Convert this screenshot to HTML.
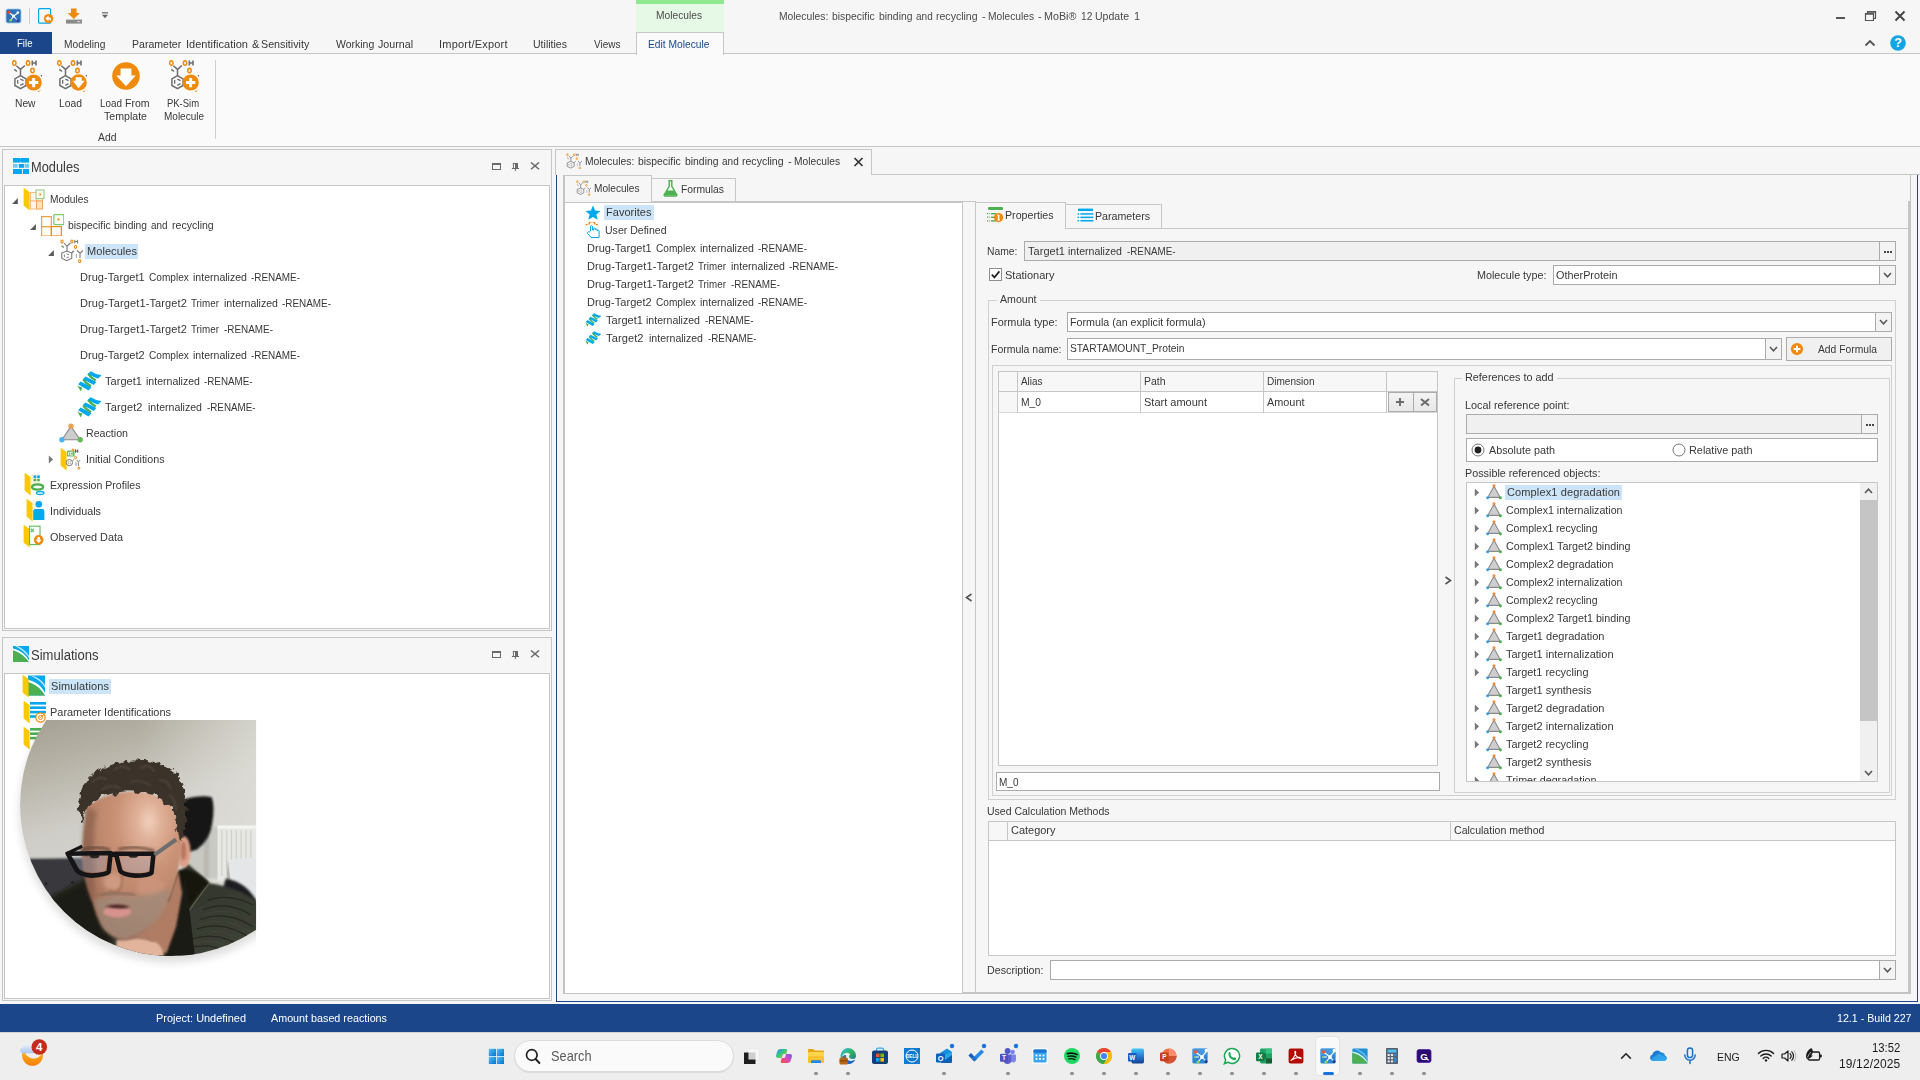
<!DOCTYPE html><html><head><meta charset="utf-8"><title>MoBi</title><style>
html,body{margin:0;padding:0;width:1920px;height:1080px;overflow:hidden;background:#f6f6f6;font-family:"Liberation Sans",sans-serif;}
#r{position:relative;width:1920px;height:1080px;overflow:hidden}
#r div,#r span,#r svg{position:absolute;box-sizing:border-box}
#r span{white-space:pre;transform-origin:0 50%}
</style></head><body><div id="r"><svg width="0" height="0" style="position:absolute"><defs><symbol id="molnew" viewBox="0 0 32 32">
<g fill="none" stroke="#6f6f6f" stroke-width="1.5" stroke-linecap="butt">
<path d="M5.4 5.7 L9.5 9.4 L13.9 5.5 M3.2 9.3 L6 11.5 M9.5 9.4 V15.7"/>
<path d="M9.5 15.7 L15.1 18.95 V25.45 L9.5 28.7 L3.9 25.45 V18.95 Z"/>
<path d="M6.7 19.9 V23.7 M9.3 19.2 L12.6 20.7 M9.3 25.3 L12.6 23.7" stroke-width="1.3"/>
</g>
<g fill="none" stroke="#f08a0c" stroke-width="1.5"><ellipse cx="3.3" cy="3" rx="1.7" ry="2.3"/><ellipse cx="17" cy="3" rx="1.7" ry="2.3"/><ellipse cx="21.5" cy="10.5" rx="1.7" ry="2.3"/></g>
<path d="M21.3 0.5 V5.6 M25 0.5 V5.6 M21.3 3 H25" stroke="#6f6f6f" stroke-width="1.6" fill="none"/>
<circle cx="30.4" cy="15.7" r=".7" fill="#555"/><path d="M27 31.6 q1.6 -.2 2.4 -1.4" stroke="#f08a0c" stroke-width="1" fill="none"/><circle cx="22.7" cy="22.5" r="8.1" fill="#f08a0c"/><path d="M22.65 18 V27.2 M18 22.5 H27.3" stroke="#fff" stroke-width="3"/></symbol><symbol id="molload" viewBox="0 0 32 32">
<g fill="none" stroke="#6f6f6f" stroke-width="1.5" stroke-linecap="butt">
<path d="M5.4 5.7 L9.5 9.4 L13.9 5.5 M3.2 9.3 L6 11.5 M9.5 9.4 V15.7"/>
<path d="M9.5 15.7 L15.1 18.95 V25.45 L9.5 28.7 L3.9 25.45 V18.95 Z"/>
<path d="M6.7 19.9 V23.7 M9.3 19.2 L12.6 20.7 M9.3 25.3 L12.6 23.7" stroke-width="1.3"/>
</g>
<g fill="none" stroke="#f08a0c" stroke-width="1.5"><ellipse cx="3.3" cy="3" rx="1.7" ry="2.3"/><ellipse cx="17" cy="3" rx="1.7" ry="2.3"/><ellipse cx="21.5" cy="10.5" rx="1.7" ry="2.3"/></g>
<path d="M21.3 0.5 V5.6 M25 0.5 V5.6 M21.3 3 H25" stroke="#6f6f6f" stroke-width="1.6" fill="none"/>
<circle cx="30.4" cy="15.7" r=".7" fill="#555"/><path d="M27 31.6 q1.6 -.2 2.4 -1.4" stroke="#f08a0c" stroke-width="1" fill="none"/><circle cx="22.6" cy="22.5" r="8.2" fill="#f08a0c"/><path d="M19.7 17.3 h6 v3.5 h3.1 L22.6 28.3 L16.8 20.8 H19.7 Z" fill="#fff"/></symbol><symbol id="bigdown" viewBox="0 0 32 32"><circle cx="16" cy="16" r="13.8" fill="#f08a0c"/><path d="M10.6 8.4 h10.8 v7.2 h4.4 L16 26.2 L6.2 15.6 h4.4 Z" fill="#fff"/></symbol><symbol id="molsm" viewBox="0 0 23 24">
<g fill="none" stroke="#777" stroke-width="1.1">
<path d="M4 4 L7 7.25 L10.5 4 M1.5 6.75 L4 8.5 M7 7.25 V12"/>
<path d="M6.75 12 L11.75 14 V19.25 L6.75 21.75 L1.75 19.25 V14 Z"/>
<path d="M4.4 15.4 V18 M6.6 14.8 L9 15.9 M6.6 19 L9 17.9" stroke-width=".9"/>
<path d="M11.75 14 L14 11.75 M17 11.5 L20 14.25 L23 11.5 M20 14.25 V19"/>
<path d="M16.4 15 V19" stroke="#aaa"/>
</g>
<g fill="none" stroke="#f08a0c" stroke-width="1.1"><ellipse cx="2" cy="2.5" rx="1.1" ry="1.5"/><ellipse cx="11.9" cy="2.5" rx="1.1" ry="1.5"/><ellipse cx="15.5" cy="8" rx="1.1" ry="1.5"/><ellipse cx="19.75" cy="22" rx="1.1" ry="1.5"/></g>
<path d="M14.8 .8 V4.4 M17.6 .8 V4.4 M14.8 2.6 H17.6" stroke="#777" stroke-width="1" fill="none"/></symbol><symbol id="bricks" viewBox="0 0 16 16"><g fill="#00a9ee"><rect x="0" y="0" width="7.2" height="4.6"/><rect x="7.7" y="0" width="8.3" height="4.6"/><rect x="6.8" y="1" width="1.4" height="2.6"/><rect x="5.8" y="6" width="5.2" height="3.8"/><rect x="0" y="11" width="9" height="5"/><rect x="10" y="11" width="6" height="5"/></g><g fill="#6ccbf5"><rect x="0" y="6" width="4.6" height="3.8"/><rect x="11.6" y="6" width="4.4" height="3.8"/></g></symbol><symbol id="sim" viewBox="0 0 16 16"><rect x="0" y="0" width="16" height="16" fill="#00a8ec"/><path d="M0 4 C6 6 12 10 16 16 H0 Z" fill="#4caf50"/><path d="M0 2.5 C7 4 13.5 9 16 14.5 V16 C12 10 6 6 0 4.2 Z" fill="#fff"/><path d="M4 0 C9 2 14 6 16 10 V12 C13 7 8 3 2 0 Z" fill="#bfe6fb"/></symbol><symbol id="f_modules" viewBox="0 0 24 24"><path d="M0.6 0.8 L6.6 5 V23.6 L0.6 18.6 Z" fill="#fcc800"/><g fill="#fff6ea" stroke="#f6b98a" stroke-width="1"><rect x="7.5" y="5.5" width="6" height="8.5"/><rect x="13.5" y="5.5" width="6" height="8.5"/><rect x="7.5" y="14" width="6" height="8"/></g><rect x="13.5" y="14" width="6" height="8" fill="#fde3b8" stroke="#f3a15a" stroke-width="1"/><rect x="13" y="3" width="8" height="8.6" fill="#fff" stroke="#8fd07f" stroke-width="1.1"/><rect x="15.4" y="5.4" width="3" height="3.6" fill="#fde3b8"/><rect x="16.6" y="6.8" width="1.4" height="1.4" fill="#f08a0c"/></symbol><symbol id="f_init" viewBox="0 0 24 24"><path d="M0.6 0.8 L6.6 5 V23.6 L0.6 18.6 Z" fill="#fcc800"/><rect x="7" y="3.6" width="7.6" height="6" rx=".6" fill="#6cc062"/><path d="M8.6 5 v3.2 M10.4 5.2 h2.6 M10.4 8 h2.6 M10.4 5.2 v2.8" stroke="#fff" stroke-width=".9" fill="none"/><circle cx="9.4" cy="15.6" r="3.1" fill="none" stroke="#777" stroke-width="1"/><circle cx="9.4" cy="15.6" r="1.3" fill="none" stroke="#999" stroke-width=".7"/><path d="M12.4 13.8 l2 -1.6 M16.6 13 l1.8 2 l1.8 -2 M18.4 15 v4 M16 15.4 v3.4" stroke="#888" fill="none" stroke-width="1"/><g fill="none" stroke="#f08a0c" stroke-width="1"><circle cx="15.6" cy="10.6" r="1.1"/><circle cx="13" cy="3" r="1"/><circle cx="18.8" cy="21.2" r="1.1"/></g><path d="M15.6 2.4 v3.4 M17.8 2.4 v3.4 M15.6 4.1 h2.2" stroke="#444" stroke-width=".9" fill="none"/></symbol><symbol id="f_expr" viewBox="0 0 24 24"><path d="M0.6 0.8 L6.6 5 V23.6 L0.6 18.6 Z" fill="#fcc800"/><rect x="7" y="2.4" width="9" height="12" fill="#fdebd0" opacity=".7"/><g fill="#00a8ec"><rect x="9.6" y="3.4" width="2.6" height="2.6"/><rect x="13.2" y="3.4" width="2.6" height="2.6"/></g><g fill="#4caf50"><rect x="9.6" y="6.8" width="2.6" height="2.4"/><rect x="13.2" y="6.8" width="2.6" height="2.4"/></g><ellipse cx="13.6" cy="15" rx="5.6" ry="2.6" fill="none" stroke="#4caf50" stroke-width="2.2"/><ellipse cx="16.2" cy="21" rx="3.8" ry="1.5" fill="none" stroke="#00a8ec" stroke-width="1.3"/></symbol><symbol id="f_indiv" viewBox="0 0 24 24"><path d="M0.6 0.8 L6.6 5 V23.6 L0.6 18.6 Z" fill="#fcc800"/><rect x="6.6" y="1.6" width="8" height="9" fill="#fdebd0" opacity=".6"/><circle cx="12.8" cy="6.3" r="3.3" fill="#00a8ec"/><path d="M7.2 13.2 a2.2 2.2 0 0 1 2.2 -2.2 h6.8 a2.2 2.2 0 0 1 2.2 2.2 v8.9 h-11.2 Z" fill="#00a8ec"/></symbol><symbol id="f_obs" viewBox="0 0 24 24"><path d="M0.6 0.8 L6.6 5 V23.6 L0.6 18.6 Z" fill="#fcc800"/><rect x="6.6" y="2.2" width="10.4" height="18.4" fill="#fff" stroke="#5cb85c" stroke-width="1.1"/><path d="M7.8 4.6 l3 3.6 m0 -3.6 l-3 3.6" stroke="#5cb85c" stroke-width="1.1"/><circle cx="15.7" cy="15.9" r="4.8" fill="#f08a0c"/><path d="M14.5 13.1 h2.4 v2.6 h1.9 l-3.1 3.2 l-3.1 -3.2 h1.9 Z" fill="#fff"/></symbol><symbol id="f_sim" viewBox="0 0 24 24"><rect x="6" y="1.5" width="17" height="20" fill="#00a8ec"/><path d="M6 8 C12 9 19 14 23 21.5 H6 Z" fill="#4caf50"/><path d="M6 6 C13 7 20 12 23 19 V21.5 C19 14 12 9.5 6 8 Z" fill="#fff"/><path d="M10 1.5 C15 3 21 7 23 11 V14 C20 8 14 4 8 1.5 Z" fill="#bfe6fb"/><path d="M0.6 0.8 L6.6 5 V23.6 L0.6 18.6 Z" fill="#fcc800"/></symbol><symbol id="f_pi" viewBox="0 0 24 24"><g fill="#00a8ec"><rect x="7" y="2" width="16" height="2.6"/><rect x="7" y="6.4" width="16" height="2.6"/><rect x="7" y="10.8" width="16" height="2.6"/><rect x="7" y="15.2" width="9" height="2.6"/></g><path d="M0.6 0.8 L6.6 5 V23.6 L0.6 18.6 Z" fill="#fcc800"/><circle cx="17.5" cy="17.5" r="4.6" fill="#fff" stroke="#f08a0c" stroke-width="1.2"/><circle cx="17.5" cy="17.5" r="2" fill="none" stroke="#f08a0c" stroke-width="1"/><path d="M17.5 17.5 l4 -4" stroke="#f08a0c" stroke-width="1"/></symbol><symbol id="f_sa" viewBox="0 0 24 24"><g fill="#4caf50"><rect x="7" y="2" width="16" height="2.6"/><rect x="7" y="6.4" width="16" height="2.6"/><rect x="7" y="10.8" width="16" height="2.6"/></g><path d="M0.6 0.8 L6.6 5 V23.6 L0.6 18.6 Z" fill="#fcc800"/></symbol><symbol id="module" viewBox="0 0 23 22.5"><g fill="none" stroke="#f3a043" stroke-width="1.2"><rect x=".6" y="2.6" width="9.75" height="10"/><rect x=".6" y="12.6" width="9.75" height="9.4"/></g><rect x="10.35" y="12.6" width="10" height="9.4" fill="none" stroke="#f08a0c" stroke-width="1.2"/><rect x="12.85" y=".6" width="10" height="10" rx=".8" fill="#fff" stroke="#7fcc6c" stroke-width="1.3"/><rect x="16.5" y="4.4" width="2" height="2" fill="#f08a0c"/></symbol><symbol id="prot" viewBox="0 0 24.6 20.6"><g fill="#4caf50"><path d="M10.2 3.4 Q12.4 7 18 10.6 L19.4 8.6 Q14.6 6 12.4 1.8 Z"/><path d="M5.2 9 Q7.4 12.6 13.2 16.2 L14.6 14.2 Q9.6 11.6 7.4 7.4 Z"/><path d="M0.3 14.2 L3.7 20.5 L5.4 16.6 Q2.6 16 0.3 14.2 Z"/></g><g fill="#00a9ee"><path d="M11 2.8 L13.7 0.2 Q19 3.6 24.5 4.1 Q22.6 6.6 20.6 7.4 Q16 6 11 2.8 Z"/><path d="M5.9 8.1 L8.5 5.5 L19.4 11.1 L16.7 14.1 Z"/><path d="M1.1 13.3 L3.7 10.4 L14.5 16.3 L11.5 19.4 Z"/></g></symbol><symbol id="react" viewBox="0 0 24 20"><path d="M12 3.4 L21.2 16.7 H2.9 Z" fill="#cdcdcd" stroke="#8a8a8a" stroke-width="1.1" stroke-linejoin="round"/><circle cx="12" cy="3.3" r="2.7" fill="#eda253"/><circle cx="2.9" cy="16.7" r="2.7" fill="#4db5ee"/><circle cx="21.2" cy="16.7" r="2.7" fill="#67b95b"/></symbol><symbol id="react16" viewBox="0 0 16 16"><path d="M8 2.2 L14.2 13.4 H1.8 Z" fill="#cfcfcf" stroke="#8a8a8a" stroke-width="1.1" stroke-linejoin="round"/><circle cx="8" cy="1.8" r="1.5" fill="#e98a3c"/><circle cx="1.6" cy="13.8" r="1.5" fill="#3aa0e8"/><circle cx="14.4" cy="13.8" r="1.5" fill="#4cae4f"/></symbol><symbol id="star" viewBox="0 0 16 16"><path d="M8 0.6 L10.2 5.8 L15.8 6.2 L11.5 9.9 L12.9 15.4 L8 12.4 L3.1 15.4 L4.5 9.9 L0.2 6.2 L5.8 5.8 Z" fill="#00a8ec"/></symbol><symbol id="hand" viewBox="0 0 16 16"><path d="M0.5 2.6 h2 M4 2.6 a3 3 0 0 1 6 0 M11 2.6 h2" stroke="#f08a0c" stroke-width="1.4" fill="none"/><path d="M5.5 9 V4.6 a1 1 0 0 1 2 0 V8 h1.2 v-1 a.9 .9 0 0 1 1.8 0 v1 a.9 .9 0 0 1 1.8 0 v1 a.9 .9 0 0 1 1.8 0 V15.5 H6 L2.6 11.4 a1 1 0 0 1 1.5 -1.3 Z" fill="#fff" stroke="#00a8ec" stroke-width="1"/></symbol><symbol id="flask" viewBox="0 0 16 18"><path d="M5.8 0.8 h4.4 M6.6 1 V6.6 L1.4 15.4 a1 1 0 0 0 .9 1.6 H13.7 a1 1 0 0 0 .9 -1.6 L9.4 6.6 V1" fill="none" stroke="#4caf50" stroke-width="1.5"/><path d="M4.6 11 h6.8 l3 5.2 H1.6 Z" fill="#4caf50"/></symbol><symbol id="props" viewBox="0 0 17 16"><rect x="1" y="0" width="15" height="3" rx="1" fill="#4caf50"/><g stroke="#4caf50" stroke-width="1.2" stroke-dasharray="1.3 1"><path d="M0 6.6 h3 M0 10.2 h3 M0 13.8 h3"/></g><g fill="#4caf50"><rect x="4" y="6" width="5" height="1.4"/><rect x="4" y="9.6" width="4" height="1.4"/><rect x="4" y="13.2" width="5" height="1.4"/></g><circle cx="11.6" cy="10.6" r="4.6" fill="#f08a0c"/><path d="M11.6 8 v5.2" stroke="#fff" stroke-width="1.6"/><path d="M10.4 8.2 h1.8 M10.4 13 h2.6" stroke="#fff" stroke-width="1"/></symbol><symbol id="params" viewBox="0 0 17 16"><rect x="1" y="0.6" width="15" height="2.4" fill="#00a8ec"/><g fill="#00a8ec"><rect x="3.4" y="5.2" width="13" height="1.5"/><rect x="3.4" y="8.6" width="13" height="1.5"/><rect x="3.4" y="12" width="13" height="1.5"/><rect x=".6" y="5.2" width="1.5" height="1.5"/><rect x=".6" y="8.6" width="1.5" height="1.5"/><rect x=".6" y="12" width="1.5" height="1.5"/></g></symbol><symbol id="addc" viewBox="0 0 16 16"><circle cx="8" cy="8" r="7" fill="#f08a0c"/><path d="M8 4.2 v7.6 M4.2 8 h7.6" stroke="#fff" stroke-width="2.2"/></symbol></defs></svg><div style="left:0px;top:0px;width:1920px;height:54px;background:#f6f6f6"></div>
<div style="left:0px;top:54px;width:1920px;height:92px;background:#fafafa"></div>
<div style="left:0px;top:53px;width:1920px;height:1px;background:#c6c6c6"></div>
<div style="left:0px;top:146px;width:1920px;height:1px;background:#c6c6c6"></div>
<div style="left:0px;top:147px;width:1920px;height:857px;background:#f6f6f6"></div>
<div style="left:636px;top:0px;width:88px;height:4px;background:#90e890"></div>
<div style="left:636px;top:4px;width:88px;height:28px;background:#e6f9e6"></div>
<span style="left:655.7px;top:7.0px;line-height:16px;font-size:11px;color:#4a4a4a;transform:scaleX(0.9287);">Molecules</span>
<span style="left:779.0px;top:8.0px;line-height:16px;font-size:11px;color:#4a4a4a;transform:scaleX(0.9377);">Molecules:</span>
<span style="left:832.4px;top:8.0px;line-height:16px;font-size:11px;color:#4a4a4a;transform:scaleX(0.9436);">bispecific</span>
<span style="left:878.5px;top:8.0px;line-height:16px;font-size:11px;color:#4a4a4a;transform:scaleX(0.9441);">binding</span>
<span style="left:915.7px;top:8.0px;line-height:16px;font-size:11px;color:#4a4a4a;transform:scaleX(0.9096);">and</span>
<span style="left:936.4px;top:8.0px;line-height:16px;font-size:11px;color:#4a4a4a;transform:scaleX(0.9584);">recycling</span>
<span style="left:982.4px;top:8.0px;line-height:16px;font-size:11px;color:#4a4a4a;transform:scaleX(.9999);">-</span>
<span style="left:988.2px;top:8.0px;line-height:16px;font-size:11px;color:#4a4a4a;transform:scaleX(0.9287);">Molecules</span>
<span style="left:1038.4px;top:8.0px;line-height:16px;font-size:11px;color:#4a4a4a;transform:scaleX(.9999);">-</span>
<span style="left:1044.0px;top:8.0px;line-height:16px;font-size:11px;color:#4a4a4a;transform:scaleX(0.9767);">MoBi®</span>
<span style="left:1080.7px;top:8.0px;line-height:16px;font-size:11px;color:#4a4a4a;transform:scaleX(0.9224);">12</span>
<span style="left:1095.0px;top:8.0px;line-height:16px;font-size:11px;color:#4a4a4a;transform:scaleX(0.9582);">Update</span>
<span style="left:1133.7px;top:8.0px;line-height:16px;font-size:11px;color:#4a4a4a;transform:scaleX(.9999);">1</span>
<div style="left:0px;top:32px;width:52px;height:22px;background:#1b478a"></div>
<span style="left:17.2px;top:35.0px;line-height:16px;font-size:11px;color:#fff;transform:scaleX(0.8740);">File</span>
<span style="left:64.2px;top:36.0px;line-height:16px;font-size:11px;color:#383838;transform:scaleX(0.9296);">Modeling</span>
<span style="left:132.2px;top:36.0px;line-height:16px;font-size:11px;color:#383838;transform:scaleX(0.9589);">Parameter</span>
<span style="left:185.95px;top:36.0px;line-height:16px;font-size:11px;color:#383838;letter-spacing:0.018px;transform:scaleX(.9999);">Identification</span>
<span style="left:252.2px;top:36.0px;line-height:16px;font-size:11px;color:#383838;transform:scaleX(.9999);">&amp;</span>
<span style="left:261.45px;top:36.0px;line-height:16px;font-size:11px;color:#383838;transform:scaleX(0.9741);">Sensitivity</span>
<span style="left:336.45px;top:36.0px;line-height:16px;font-size:11px;color:#383838;transform:scaleX(0.9525);">Working</span>
<span style="left:377.95px;top:36.0px;line-height:16px;font-size:11px;color:#383838;transform:scaleX(0.9701);">Journal</span>
<span style="left:439.2px;top:36.0px;line-height:16px;font-size:11px;color:#383838;letter-spacing:0.206px;transform:scaleX(.9999);">Import/Export</span>
<span style="left:532.7px;top:36.0px;line-height:16px;font-size:11px;color:#383838;transform:scaleX(0.9590);">Utilities</span>
<span style="left:593.7px;top:36.0px;line-height:16px;font-size:11px;color:#383838;transform:scaleX(0.9089);">Views</span>
<div style="left:636px;top:32px;width:88px;height:23px;background:#fafafa;border:1px solid #c6c6c6;border-bottom:none"></div>
<span style="left:648.2px;top:36.0px;line-height:16px;font-size:11px;color:#1b478a;transform:scaleX(0.9312);">Edit Molecule</span>
<div style="left:1836px;top:17px;width:9px;height:2px;background:#555"></div>
<svg style="left:1864px;top:10px;" width="13" height="12" viewBox="0 0 13 12"><path d="M3.5 3.5 V1.5 H11.5 V8.5 H9.5 M1.5 3.5 H9.5 V10.5 H1.5 Z" fill="none" stroke="#555" stroke-width="1.2"/><path d="M1.5 4 H9.5 M3.5 2 H11.5" stroke="#555" stroke-width="1.6"/></svg>
<svg style="left:1894px;top:10px;" width="12" height="12" viewBox="0 0 12 12"><path d="M1.5 1.5 L10.5 10.5 M10.5 1.5 L1.5 10.5" stroke="#444" stroke-width="1.9"/></svg>
<svg style="left:1864px;top:39px;" width="12" height="8" viewBox="0 0 12 8"><path d="M1.5 6.5 L6 2 L10.5 6.5" fill="none" stroke="#555" stroke-width="1.8"/></svg>
<svg style="left:1890px;top:35px;" width="16" height="16" viewBox="0 0 16 16"><circle cx="8" cy="8" r="7.8" fill="#12a5e6"/><text x="8" y="12.4" text-anchor="middle" font-family="Liberation Sans" font-weight="700" font-size="12.5" fill="#fff">?</text></svg>
<svg style="left:5px;top:8px;" width="17" height="16" viewBox="0 0 17 16"><rect x="1" y="1" width="15" height="14" rx="2" fill="#2d72b8"/><rect x="1" y="1" width="15" height="14" rx="2" fill="none" stroke="#9cc7ea" stroke-width=".8"/><g stroke="#fff" stroke-width="1.1" fill="none"><path d="M4 4.5 L8.5 8 L13 5 M8.5 8 L6 12 M8.5 8 L12.5 12.5"/></g><circle cx="4" cy="4.3" r="1.5" fill="#e8452c"/><circle cx="12.8" cy="4.6" r="1.3" fill="#fff"/><circle cx="5.6" cy="12.2" r="1.3" fill="#8bd448"/><circle cx="12.6" cy="12.6" r="1.3" fill="#2b3f9e"/><circle cx="8.5" cy="8" r="1.6" fill="#fff"/></svg>
<div style="left:29px;top:8px;width:1px;height:16px;background:#cfcfcf"></div>
<svg style="left:37px;top:7px;" width="18" height="18" viewBox="0 0 18 18"><rect x="1.6" y="1.6" width="12" height="14.6" rx="1" fill="none" stroke="#00a8ec" stroke-width="1.2"/><circle cx="11.6" cy="11.6" r="4.7" fill="#f08a0c"/><path d="M8.4 11.4 l3 -3 v1.8 c2.6 0 3.2 1.8 2.4 3.8 c-.4 -1.2 -1.2 -1.6 -2.4 -1.6 v2 Z" fill="#fff"/></svg>
<svg style="left:65px;top:8px;" width="18" height="17" viewBox="0 0 18 17"><path d="M6 .5 h5.6 v4.6 h3.4 L8.8 11 L2.6 5.1 H6 Z" fill="#f08a0c"/><rect x="1" y="11.6" width="16" height="4" fill="#8a8a8a"/><rect x="12" y="13.2" width="3.4" height="1" fill="#d8d8d8"/></svg>
<svg style="left:101px;top:11px;" width="8" height="8" viewBox="0 0 8 8"><path d="M1 1.8 h6" stroke="#666" stroke-width="1.2"/><path d="M1 3.8 h6 l-3 3.4 Z" fill="#666"/></svg>
<svg style="left:11px;top:60px" width="32" height="32"><use href="#molnew" width="32" height="32"/></svg>
<svg style="left:56px;top:60px" width="32" height="32"><use href="#molload" width="32" height="32"/></svg>
<svg style="left:110px;top:60px" width="32" height="32"><use href="#bigdown" width="32" height="32"/></svg>
<svg style="left:168px;top:60px" width="32" height="32"><use href="#molnew" width="32" height="32"/></svg>
<span style="left:15.2px;top:95.0px;line-height:16px;font-size:11px;color:#383838;transform:scaleX(0.9312);">New</span>
<span style="left:58.7px;top:95.0px;line-height:16px;font-size:11px;color:#383838;transform:scaleX(0.9394);">Load</span>
<span style="left:100.2px;top:95.0px;line-height:16px;font-size:11px;color:#383838;transform:scaleX(0.8985);">Load</span>
<span style="left:125.45px;top:95.0px;line-height:16px;font-size:11px;color:#383838;transform:scaleX(0.9544);">From</span>
<span style="left:103.7px;top:108.0px;line-height:16px;font-size:11px;color:#383838;transform:scaleX(0.9632);">Template</span>
<span style="left:166.7px;top:95.0px;line-height:16px;font-size:11px;color:#383838;transform:scaleX(0.8583);">PK-Sim</span>
<span style="left:163.7px;top:108.0px;line-height:16px;font-size:11px;color:#383838;transform:scaleX(0.9084);">Molecule</span>
<span style="left:97.7px;top:129.0px;line-height:16px;font-size:11px;color:#383838;transform:scaleX(0.9449);">Add</span>
<div style="left:215px;top:60px;width:1px;height:79px;background:#d0d0d0"></div>
<div style="left:2px;top:149px;width:550px;height:482px;background:#f6f6f6;border:1px solid #c6c6c6"></div>
<div style="left:4px;top:185px;width:546px;height:444px;background:#fff;border:1px solid #c6c6c6"></div>
<svg style="left:13px;top:158px" width="16" height="16"><use href="#bricks" width="16" height="16"/></svg>
<span style="left:31.4px;top:158.5px;line-height:16px;font-size:14px;color:#3a3a3a;transform:scaleX(0.9164);">Modules</span>
<svg style="left:492px;top:163px;" width="9" height="7" viewBox="0 0 9 7"><rect x=".5" y=".5" width="8" height="6" fill="none" stroke="#6a6a6a" stroke-width="1"/><rect x="0" y="0" width="9" height="2" fill="#6a6a6a"/></svg>
<svg style="left:511px;top:163px;" width="9" height="8" viewBox="0 0 9 8"><path d="M2.4 0 V5" stroke="#6a6a6a" stroke-width="1"/><rect x="1.9" y="0" width="5" height="1" fill="#6a6a6a"/><rect x="4" y="0" width="3" height="5" fill="#6a6a6a"/><rect x=".9" y="5" width="7.2" height="1" fill="#6a6a6a"/><rect x="3.9" y="6" width="1" height="2" fill="#6a6a6a"/></svg>
<svg style="left:529.5px;top:162px;" width="10" height="8" viewBox="0 0 10 8"><path d="M1 .5 L9 7.3 M9 .5 L1 7.3" stroke="#6a6a6a" stroke-width="1.5"/></svg>
<div style="left:2px;top:637px;width:550px;height:364px;background:#f6f6f6;border:1px solid #c6c6c6"></div>
<div style="left:4px;top:673px;width:546px;height:326px;background:#fff;border:1px solid #c6c6c6"></div>
<svg style="left:13px;top:646px" width="16" height="16"><use href="#sim" width="16" height="16"/></svg>
<span style="left:31.4px;top:646.5px;line-height:16px;font-size:14px;color:#3a3a3a;transform:scaleX(0.9326);">Simulations</span>
<svg style="left:492px;top:651px;" width="9" height="7" viewBox="0 0 9 7"><rect x=".5" y=".5" width="8" height="6" fill="none" stroke="#6a6a6a" stroke-width="1"/><rect x="0" y="0" width="9" height="2" fill="#6a6a6a"/></svg>
<svg style="left:511px;top:651px;" width="9" height="8" viewBox="0 0 9 8"><path d="M2.4 0 V5" stroke="#6a6a6a" stroke-width="1"/><rect x="1.9" y="0" width="5" height="1" fill="#6a6a6a"/><rect x="4" y="0" width="3" height="5" fill="#6a6a6a"/><rect x=".9" y="5" width="7.2" height="1" fill="#6a6a6a"/><rect x="3.9" y="6" width="1" height="2" fill="#6a6a6a"/></svg>
<svg style="left:529.5px;top:650px;" width="10" height="8" viewBox="0 0 10 8"><path d="M1 .5 L9 7.3 M9 .5 L1 7.3" stroke="#6a6a6a" stroke-width="1.5"/></svg>
<svg style="left:12.25px;top:197.5px;" width="6" height="6" viewBox="0 0 6 6"><path d="M5.9 .1 V5.9 H.1 Z" fill="#5a5a5a"/></svg>
<svg style="left:23px;top:187px" width="24" height="24"><use href="#f_modules" width="24" height="24"/></svg>
<span style="left:50.2px;top:191.0px;line-height:16px;font-size:11px;color:#383838;transform:scaleX(0.9260);">Modules</span>
<svg style="left:30.25px;top:223.5px;" width="6" height="6" viewBox="0 0 6 6"><path d="M5.9 .1 V5.9 H.1 Z" fill="#5a5a5a"/></svg>
<svg style="left:41.4px;top:213.6px" width="23" height="22.5"><use href="#module" width="23" height="22.5"/></svg>
<span style="left:68.2px;top:217.0px;line-height:16px;font-size:11px;color:#383838;transform:scaleX(0.9448);">bispecific</span>
<span style="left:114.2px;top:217.0px;line-height:16px;font-size:11px;color:#383838;transform:scaleX(0.9300);">binding</span>
<span style="left:151.45px;top:217.0px;line-height:16px;font-size:11px;color:#383838;transform:scaleX(0.8987);">and</span>
<span style="left:172.2px;top:217.0px;line-height:16px;font-size:11px;color:#383838;transform:scaleX(0.9618);">recycling</span>
<svg style="left:48.25px;top:249.5px;" width="6" height="6" viewBox="0 0 6 6"><path d="M5.9 .1 V5.9 H.1 Z" fill="#5a5a5a"/></svg>
<svg style="left:59.5px;top:239px" width="23" height="24"><use href="#molsm" width="23" height="24"/></svg>
<div style="left:85px;top:244px;width:53px;height:15px;background:#cce4f7"></div>
<span style="left:86.7px;top:243.0px;line-height:16px;font-size:11px;color:#383838;letter-spacing:0.059px;transform:scaleX(.9999);">Molecules</span>
<span style="left:80.3px;top:269.0px;line-height:16px;font-size:11px;color:#383838;letter-spacing:0.045px;transform:scaleX(.9999);">Drug-Target1</span>
<span style="left:148.8px;top:269.0px;line-height:16px;font-size:11px;color:#383838;transform:scaleX(0.9169);">Complex</span>
<span style="left:192.5px;top:269.0px;line-height:16px;font-size:11px;color:#383838;transform:scaleX(0.9597);">internalized</span>
<span style="left:250.7px;top:269.0px;line-height:16px;font-size:11px;color:#383838;transform:scaleX(0.9009);">-RENAME-</span>
<span style="left:80.3px;top:295.0px;line-height:16px;font-size:11px;color:#383838;letter-spacing:0.123px;transform:scaleX(.9999);">Drug-Target1-Target2</span>
<span style="left:191.4px;top:295.0px;line-height:16px;font-size:11px;color:#383838;transform:scaleX(0.8892);">Trimer</span>
<span style="left:223.5px;top:295.0px;line-height:16px;font-size:11px;color:#383838;transform:scaleX(0.9597);">internalized</span>
<span style="left:281.7px;top:295.0px;line-height:16px;font-size:11px;color:#383838;transform:scaleX(0.9009);">-RENAME-</span>
<span style="left:80.3px;top:321.0px;line-height:16px;font-size:11px;color:#383838;letter-spacing:0.123px;transform:scaleX(.9999);">Drug-Target1-Target2</span>
<span style="left:191.4px;top:321.0px;line-height:16px;font-size:11px;color:#383838;transform:scaleX(0.8892);">Trimer</span>
<span style="left:223.7px;top:321.0px;line-height:16px;font-size:11px;color:#383838;transform:scaleX(0.9009);">-RENAME-</span>
<span style="left:80.3px;top:347.0px;line-height:16px;font-size:11px;color:#383838;letter-spacing:0.045px;transform:scaleX(.9999);">Drug-Target2</span>
<span style="left:148.8px;top:347.0px;line-height:16px;font-size:11px;color:#383838;transform:scaleX(0.9169);">Complex</span>
<span style="left:192.5px;top:347.0px;line-height:16px;font-size:11px;color:#383838;transform:scaleX(0.9597);">internalized</span>
<span style="left:250.7px;top:347.0px;line-height:16px;font-size:11px;color:#383838;transform:scaleX(0.9009);">-RENAME-</span>
<svg style="left:76.7px;top:370.8px" width="24.6" height="20.6"><use href="#prot" width="24.6" height="20.6"/></svg>
<span style="left:104.9px;top:373.0px;line-height:16px;font-size:11px;color:#383838;letter-spacing:0.049px;transform:scaleX(.9999);">Target1</span>
<span style="left:145.6px;top:373.0px;line-height:16px;font-size:11px;color:#383838;transform:scaleX(0.9597);">internalized</span>
<span style="left:204.2px;top:373.0px;line-height:16px;font-size:11px;color:#383838;transform:scaleX(0.8917);">-RENAME-</span>
<svg style="left:76.7px;top:396.8px" width="24.6" height="20.6"><use href="#prot" width="24.6" height="20.6"/></svg>
<span style="left:104.9px;top:399.0px;line-height:16px;font-size:11px;color:#383838;letter-spacing:0.133px;transform:scaleX(.9999);">Target2</span>
<span style="left:148.4px;top:399.0px;line-height:16px;font-size:11px;color:#383838;transform:scaleX(0.9597);">internalized</span>
<span style="left:207.0px;top:399.0px;line-height:16px;font-size:11px;color:#383838;transform:scaleX(0.8917);">-RENAME-</span>
<svg style="left:59px;top:423px" width="24" height="20"><use href="#react" width="24" height="20"/></svg>
<span style="left:86.2px;top:425.0px;line-height:16px;font-size:11px;color:#383838;transform:scaleX(0.9673);">Reaction</span>
<svg style="left:48px;top:455px;" width="6" height="9" viewBox="0 0 6 9"><path d="M.8 .6 L5 4.5 L.8 8.4 Z" fill="#777"/></svg>
<svg style="left:59.8px;top:447px" width="24" height="24"><use href="#f_init" width="24" height="24"/></svg>
<span style="left:86.2px;top:451.0px;line-height:16px;font-size:11px;color:#383838;transform:scaleX(0.9725);">Initial Conditions</span>
<svg style="left:23.6px;top:472.4px" width="24" height="24"><use href="#f_expr" width="24" height="24"/></svg>
<span style="left:49.7px;top:477.0px;line-height:16px;font-size:11px;color:#383838;transform:scaleX(0.9612);">Expression Profiles</span>
<svg style="left:25.6px;top:498.4px" width="24" height="24"><use href="#f_indiv" width="24" height="24"/></svg>
<span style="left:49.7px;top:503.0px;line-height:16px;font-size:11px;color:#383838;transform:scaleX(0.9811);">Individuals</span>
<svg style="left:22.5px;top:524.4px" width="24" height="24"><use href="#f_obs" width="24" height="24"/></svg>
<span style="left:49.7px;top:529.0px;line-height:16px;font-size:11px;color:#383838;transform:scaleX(0.9867);">Observed Data</span>
<svg style="left:22px;top:674px" width="24" height="24"><use href="#f_sim" width="24" height="24"/></svg>
<div style="left:49px;top:679px;width:62px;height:15px;background:#cce4f7"></div>
<span style="left:50.7px;top:678.0px;line-height:16px;font-size:11px;color:#383838;letter-spacing:0.114px;transform:scaleX(.9999);">Simulations</span>
<svg style="left:23px;top:700px" width="24" height="24"><use href="#f_pi" width="24" height="24"/></svg>
<span style="left:50.2px;top:704.0px;line-height:16px;font-size:11px;color:#383838;transform:scaleX(0.9945);">Parameter Identifications</span>
<svg style="left:23px;top:726px" width="24" height="24"><use href="#f_sa" width="24" height="24"/></svg>
<div style="left:555px;top:149px;width:317px;height:26px;background:#f6f6f6;border:1px solid #c6c6c6;border-bottom:none"></div>
<div style="left:872px;top:174px;width:1048px;height:1px;background:#c6c6c6"></div>
<svg style="left:566px;top:152.5px" width="16" height="16.7"><use href="#molsm" width="16" height="16.7"/></svg>
<span style="left:585.0px;top:153.0px;line-height:16px;font-size:11px;color:#383838;transform:scaleX(0.9377);">Molecules:</span>
<span style="left:638.4px;top:153.0px;line-height:16px;font-size:11px;color:#383838;transform:scaleX(0.9436);">bispecific</span>
<span style="left:684.5px;top:153.0px;line-height:16px;font-size:11px;color:#383838;transform:scaleX(0.9441);">binding</span>
<span style="left:721.7px;top:153.0px;line-height:16px;font-size:11px;color:#383838;transform:scaleX(0.9096);">and</span>
<span style="left:742.4px;top:153.0px;line-height:16px;font-size:11px;color:#383838;transform:scaleX(0.9584);">recycling</span>
<span style="left:788.4px;top:153.0px;line-height:16px;font-size:11px;color:#383838;transform:scaleX(.9999);">-</span>
<span style="left:794.2px;top:153.0px;line-height:16px;font-size:11px;color:#383838;transform:scaleX(0.9287);">Molecules</span>
<svg style="left:853px;top:157px;" width="11" height="10" viewBox="0 0 11 10"><path d="M1.5 1 L9.5 9 M9.5 1 L1.5 9" stroke="#333" stroke-width="1.7"/></svg>
<div style="left:556px;top:175px;width:1px;height:827px;background:#1b478a"></div>
<div style="left:1917px;top:175px;width:1px;height:827px;background:#1b478a"></div>
<div style="left:556px;top:1001px;width:1362px;height:1px;background:#1b478a"></div>
<div style="left:563px;top:175px;width:89px;height:27px;background:#f6f6f6;border:1px solid #c6c6c6;border-bottom:none;border-left:none"></div>
<div style="left:652px;top:178px;width:84px;height:24px;background:#f6f6f6;border:1px solid #c6c6c6;border-left:none"></div>
<div style="left:652px;top:201px;width:1258px;height:1px;background:#c6c6c6"></div>
<div style="left:563px;top:175px;width:2px;height:819px;background:#c4c4c4"></div>
<div style="left:565px;top:202px;width:1px;height:790px;background:#dedede"></div>
<div style="left:563px;top:992px;width:1348px;height:2px;background:#c4c4c4"></div>
<div style="left:1910px;top:175px;width:1px;height:27px;background:#c4c4c4"></div>
<div style="left:1909px;top:201px;width:2px;height:793px;background:#c4c4c4"></div>
<svg style="left:576px;top:180px" width="15.3" height="16"><use href="#molsm" width="15.3" height="16"/></svg>
<span style="left:594.2px;top:180.0px;line-height:16px;font-size:11px;color:#383838;transform:scaleX(0.9186);">Molecules</span>
<svg style="left:663px;top:180px" width="15" height="17"><use href="#flask" width="15" height="17"/></svg>
<span style="left:680.7px;top:181.0px;line-height:16px;font-size:11px;color:#383838;transform:scaleX(0.9380);">Formulas</span>
<div style="left:565px;top:202px;width:398px;height:791px;background:#fff;border:1px solid #c6c6c6;border-left:none;border-bottom:none"></div>
<svg style="left:585px;top:204.6px" width="16" height="15.4"><use href="#star" width="16" height="15.4"/></svg>
<div style="left:604px;top:205px;width:50px;height:15px;background:#cce4f7"></div>
<span style="left:606.2px;top:204.0px;line-height:16px;font-size:11px;color:#383838;letter-spacing:0.031px;transform:scaleX(.9999);">Favorites</span>
<svg style="left:585px;top:222px" width="16" height="16"><use href="#hand" width="16" height="16"/></svg>
<span style="left:605.2px;top:222.0px;line-height:16px;font-size:11px;color:#383838;transform:scaleX(0.9579);">User Defined</span>
<span style="left:587.3px;top:240.0px;line-height:16px;font-size:11px;color:#383838;letter-spacing:0.045px;transform:scaleX(.9999);">Drug-Target1</span>
<span style="left:655.8px;top:240.0px;line-height:16px;font-size:11px;color:#383838;transform:scaleX(0.9169);">Complex</span>
<span style="left:699.5px;top:240.0px;line-height:16px;font-size:11px;color:#383838;transform:scaleX(0.9597);">internalized</span>
<span style="left:757.7px;top:240.0px;line-height:16px;font-size:11px;color:#383838;transform:scaleX(0.9009);">-RENAME-</span>
<span style="left:587.3px;top:258.0px;line-height:16px;font-size:11px;color:#383838;letter-spacing:0.123px;transform:scaleX(.9999);">Drug-Target1-Target2</span>
<span style="left:698.4px;top:258.0px;line-height:16px;font-size:11px;color:#383838;transform:scaleX(0.8892);">Trimer</span>
<span style="left:730.5px;top:258.0px;line-height:16px;font-size:11px;color:#383838;transform:scaleX(0.9597);">internalized</span>
<span style="left:788.7px;top:258.0px;line-height:16px;font-size:11px;color:#383838;transform:scaleX(0.9009);">-RENAME-</span>
<span style="left:587.3px;top:276.0px;line-height:16px;font-size:11px;color:#383838;letter-spacing:0.123px;transform:scaleX(.9999);">Drug-Target1-Target2</span>
<span style="left:698.4px;top:276.0px;line-height:16px;font-size:11px;color:#383838;transform:scaleX(0.8892);">Trimer</span>
<span style="left:730.7px;top:276.0px;line-height:16px;font-size:11px;color:#383838;transform:scaleX(0.9009);">-RENAME-</span>
<span style="left:587.3px;top:294.0px;line-height:16px;font-size:11px;color:#383838;letter-spacing:0.045px;transform:scaleX(.9999);">Drug-Target2</span>
<span style="left:655.8px;top:294.0px;line-height:16px;font-size:11px;color:#383838;transform:scaleX(0.9169);">Complex</span>
<span style="left:699.5px;top:294.0px;line-height:16px;font-size:11px;color:#383838;transform:scaleX(0.9597);">internalized</span>
<span style="left:757.7px;top:294.0px;line-height:16px;font-size:11px;color:#383838;transform:scaleX(0.9009);">-RENAME-</span>
<svg style="left:584.6px;top:313px" width="16.4" height="13.8"><use href="#prot" width="16.4" height="13.8"/></svg>
<span style="left:605.7px;top:312.0px;line-height:16px;font-size:11px;color:#383838;letter-spacing:0.049px;transform:scaleX(.9999);">Target1</span>
<span style="left:646.4px;top:312.0px;line-height:16px;font-size:11px;color:#383838;transform:scaleX(0.9597);">internalized</span>
<span style="left:705.0px;top:312.0px;line-height:16px;font-size:11px;color:#383838;transform:scaleX(0.8917);">-RENAME-</span>
<svg style="left:584.6px;top:331px" width="16.4" height="13.8"><use href="#prot" width="16.4" height="13.8"/></svg>
<span style="left:605.7px;top:330.0px;line-height:16px;font-size:11px;color:#383838;letter-spacing:0.133px;transform:scaleX(.9999);">Target2</span>
<span style="left:649.2px;top:330.0px;line-height:16px;font-size:11px;color:#383838;transform:scaleX(0.9597);">internalized</span>
<span style="left:707.8px;top:330.0px;line-height:16px;font-size:11px;color:#383838;transform:scaleX(0.8917);">-RENAME-</span>
<svg style="left:965px;top:593px;" width="8" height="9" viewBox="0 0 8 9"><path d="M6.5 1 L1.5 4.5 L6.5 8" fill="none" stroke="#555" stroke-width="1.6"/></svg>
<div style="left:975px;top:201px;width:934px;height:791px;background:#f6f6f6;border-left:1px solid #c6c6c6"></div>
<div style="left:975px;top:202px;width:91px;height:27px;background:#f6f6f6;border:1px solid #c6c6c6;border-bottom:none;border-left:1px solid #c6c6c6"></div>
<div style="left:1066px;top:204px;width:96px;height:25px;background:#f6f6f6;border:1px solid #c6c6c6;border-left:none"></div>
<div style="left:1066px;top:228px;width:843px;height:1px;background:#c6c6c6"></div>
<div style="left:1908px;top:201px;width:1px;height:792px;background:#c6c6c6"></div>
<svg style="left:987px;top:207px" width="17" height="16"><use href="#props" width="17" height="16"/></svg>
<span style="left:1005.2px;top:207.0px;line-height:16px;font-size:11px;color:#383838;transform:scaleX(0.9673);">Properties</span>
<svg style="left:1077px;top:208px" width="17" height="16"><use href="#params" width="17" height="16"/></svg>
<span style="left:1095.2px;top:208.0px;line-height:16px;font-size:11px;color:#383838;transform:scaleX(0.9673);">Parameters</span>
<span style="left:987.2px;top:243.0px;line-height:16px;font-size:11px;color:#383838;transform:scaleX(0.9412);">Name:</span>
<div style="left:1024px;top:241px;width:856px;height:20px;background:#f0f0f0;border:1px solid #ababab"></div>
<div style="left:1879px;top:241px;width:17px;height:20px;background:#f3f3f3;border:1px solid #ababab"></div>
<div style="left:1883.5px;top:251.0px;width:2px;height:2px;background:#444"></div>
<div style="left:1886.5px;top:251.0px;width:2px;height:2px;background:#444"></div>
<div style="left:1889.5px;top:251.0px;width:2px;height:2px;background:#444"></div>
<span style="left:1027.7px;top:243.0px;line-height:16px;font-size:11px;color:#383838;letter-spacing:0.049px;transform:scaleX(.9999);">Target1</span>
<span style="left:1068.4px;top:243.0px;line-height:16px;font-size:11px;color:#383838;transform:scaleX(0.9597);">internalized</span>
<span style="left:1127.0px;top:243.0px;line-height:16px;font-size:11px;color:#383838;transform:scaleX(0.8917);">-RENAME-</span>
<div style="left:989px;top:268px;width:13px;height:13px;background:#fff;border:1px solid #8e8e8e"></div>
<svg style="left:990px;top:269px;" width="11" height="11" viewBox="0 0 11 11"><path d="M1.8 5.6 L4.4 8.4 L9.4 2.4" fill="none" stroke="#222" stroke-width="1.7"/></svg>
<span style="left:1005.2px;top:267.0px;line-height:16px;font-size:11px;color:#383838;transform:scaleX(0.9994);">Stationary</span>
<span style="left:1477.2px;top:267.0px;line-height:16px;font-size:11px;color:#383838;transform:scaleX(0.9797);">Molecule type:</span>
<div style="left:1553px;top:265px;width:327px;height:20px;background:#fff;border:1px solid #ababab"></div>
<div style="left:1879px;top:265px;width:17px;height:20px;background:#f3f3f3;border:1px solid #ababab"></div>
<svg style="left:1883.0px;top:272.0px;" width="9" height="6" viewBox="0 0 9 6"><path d="M1 1 L4.5 4.8 L8 1" fill="none" stroke="#555" stroke-width="1.5"/></svg>
<span style="left:1556.2px;top:267.0px;line-height:16px;font-size:11px;color:#383838;transform:scaleX(0.9860);">OtherProtein</span>
<div style="left:988px;top:300px;width:908px;height:500px;border:1px solid #d0d0d0"></div>
<div style="left:997px;top:293px;width:43px;height:12px;background:#f6f6f6"></div>
<span style="left:999.7px;top:291.0px;line-height:16px;font-size:11px;color:#383838;transform:scaleX(0.9625);">Amount</span>
<span style="left:991.2px;top:314.0px;line-height:16px;font-size:11px;color:#383838;transform:scaleX(0.9888);">Formula type:</span>
<div style="left:1067px;top:312px;width:809px;height:20px;background:#fff;border:1px solid #ababab"></div>
<div style="left:1875px;top:312px;width:17px;height:20px;background:#f3f3f3;border:1px solid #ababab"></div>
<svg style="left:1879.0px;top:319.0px;" width="9" height="6" viewBox="0 0 9 6"><path d="M1 1 L4.5 4.8 L8 1" fill="none" stroke="#555" stroke-width="1.5"/></svg>
<span style="left:1070.2px;top:314.0px;line-height:16px;font-size:11px;color:#383838;transform:scaleX(0.9722);">Formula (an explicit formula)</span>
<span style="left:991.2px;top:341.0px;line-height:16px;font-size:11px;color:#383838;transform:scaleX(0.9529);">Formula name:</span>
<div style="left:1067px;top:338px;width:699px;height:22px;background:#fff;border:1px solid #ababab"></div>
<div style="left:1765px;top:338px;width:17px;height:22px;background:#f3f3f3;border:1px solid #ababab"></div>
<svg style="left:1769.0px;top:346.0px;" width="9" height="6" viewBox="0 0 9 6"><path d="M1 1 L4.5 4.8 L8 1" fill="none" stroke="#555" stroke-width="1.5"/></svg>
<span style="left:1070.2px;top:340.0px;line-height:16px;font-size:11px;color:#383838;transform:scaleX(0.9320);">STARTAMOUNT_Protein</span>
<div style="left:1786px;top:337px;width:106px;height:24px;background:#f0f0f0;border:1px solid #ababab"></div>
<svg style="left:1790px;top:342px" width="14" height="14"><use href="#addc" width="14" height="14"/></svg>
<span style="left:1817.7px;top:341.0px;line-height:16px;font-size:11px;color:#383838;transform:scaleX(0.9367);">Add Formula</span>
<div style="left:992px;top:365px;width:900px;height:431px;border:1px solid #d0d0d0"></div>
<div style="left:998px;top:371px;width:440px;height:395px;background:#fff;border:1px solid #c6c6c6"></div>
<div style="left:999px;top:372px;width:438px;height:19px;background:#f7f7f7"></div>
<div style="left:999px;top:391px;width:438px;height:1px;background:#c6c6c6"></div>
<div style="left:999px;top:412px;width:438px;height:1px;background:#d8d8d8"></div>
<div style="left:999px;top:392px;width:18px;height:20px;background:#f7f7f7"></div>
<div style="left:1017px;top:372px;width:1px;height:41px;background:#c6c6c6"></div>
<div style="left:1140px;top:372px;width:1px;height:41px;background:#c6c6c6"></div>
<div style="left:1263px;top:372px;width:1px;height:41px;background:#c6c6c6"></div>
<div style="left:1386px;top:372px;width:1px;height:41px;background:#c6c6c6"></div>
<span style="left:1021.2px;top:373.0px;line-height:16px;font-size:11px;color:#383838;transform:scaleX(0.9017);">Alias</span>
<span style="left:1144.2px;top:373.0px;line-height:16px;font-size:11px;color:#383838;transform:scaleX(0.9496);">Path</span>
<span style="left:1267.2px;top:373.0px;line-height:16px;font-size:11px;color:#383838;transform:scaleX(0.9140);">Dimension</span>
<span style="left:1021.2px;top:394.0px;line-height:16px;font-size:11px;color:#383838;transform:scaleX(0.9343);">M_0</span>
<span style="left:1144.2px;top:394.0px;line-height:16px;font-size:11px;color:#383838;letter-spacing:0.001px;transform:scaleX(.9999);">Start amount</span>
<span style="left:1267.2px;top:394.0px;line-height:16px;font-size:11px;color:#383838;transform:scaleX(0.9889);">Amount</span>
<div style="left:1388px;top:392px;width:26px;height:20px;background:linear-gradient(#f3f3f3,#e8e8e8);border:1px solid #ababab"></div>
<div style="left:1413px;top:392px;width:24px;height:20px;background:linear-gradient(#f3f3f3,#e8e8e8);border:1px solid #ababab"></div>
<svg style="left:1395px;top:397px;" width="10" height="10" viewBox="0 0 10 10"><path d="M5 1 V9 M1 5 H9" stroke="#6a6a6a" stroke-width="1.9"/></svg>
<svg style="left:1420px;top:397.5px;" width="10" height="9" viewBox="0 0 10 9"><path d="M1 1 L9 7.6 M9 1 L1 7.6" stroke="#6a6a6a" stroke-width="1.9"/></svg>
<div style="left:996px;top:772px;width:444px;height:19px;background:#fff;border:1px solid #ababab"></div>
<span style="left:999.2px;top:774.0px;line-height:16px;font-size:11px;color:#383838;transform:scaleX(0.9109);">M_0</span>
<svg style="left:1444px;top:576px;" width="8" height="9" viewBox="0 0 8 9"><path d="M1.5 1 L6.5 4.5 L1.5 8" fill="none" stroke="#555" stroke-width="1.6"/></svg>
<div style="left:1454px;top:378px;width:436px;height:415px;border:1px solid #d0d0d0"></div>
<div style="left:1462px;top:371px;width:95px;height:12px;background:#f6f6f6"></div>
<span style="left:1465.2px;top:369.0px;line-height:16px;font-size:11px;color:#383838;transform:scaleX(0.9845);">References to add</span>
<span style="left:1465.2px;top:397.0px;line-height:16px;font-size:11px;color:#383838;transform:scaleX(0.9877);">Local reference point:</span>
<div style="left:1466px;top:414px;width:396px;height:20px;background:#f0f0f0;border:1px solid #ababab"></div>
<div style="left:1861px;top:414px;width:17px;height:20px;background:#f3f3f3;border:1px solid #ababab"></div>
<div style="left:1865.5px;top:424.0px;width:2px;height:2px;background:#444"></div>
<div style="left:1868.5px;top:424.0px;width:2px;height:2px;background:#444"></div>
<div style="left:1871.5px;top:424.0px;width:2px;height:2px;background:#444"></div>
<div style="left:1466px;top:438px;width:412px;height:24px;background:#fff;border:1px solid #ababab"></div>
<svg style="left:1471px;top:443px;" width="14" height="14" viewBox="0 0 14 14"><circle cx="7" cy="7" r="6" fill="#fff" stroke="#777" stroke-width="1"/><circle cx="7" cy="7" r="3.4" fill="#222"/></svg>
<span style="left:1488.7px;top:442.0px;line-height:16px;font-size:11px;color:#383838;transform:scaleX(0.9810);">Absolute path</span>
<svg style="left:1672px;top:443px;" width="14" height="14" viewBox="0 0 14 14"><circle cx="7" cy="7" r="6" fill="#fff" stroke="#777" stroke-width="1"/></svg>
<span style="left:1689.2px;top:442.0px;line-height:16px;font-size:11px;color:#383838;transform:scaleX(0.9888);">Relative path</span>
<span style="left:1465.2px;top:465.0px;line-height:16px;font-size:11px;color:#383838;transform:scaleX(0.9806);">Possible referenced objects:</span>
<div style="left:1466px;top:482px;width:412px;height:300px;background:#fff;border:1px solid #c6c6c6;overflow:hidden"></div>
<div style="left:1505px;top:485px;width:117px;height:15px;background:#cce4f7"></div>
<svg style="left:1474px;top:488px;" width="6" height="9" viewBox="0 0 6 9"><path d="M.8 .6 L5 4.5 L.8 8.4 Z" fill="#777"/></svg>
<svg style="left:1486px;top:483.5px" width="16" height="16"><use href="#react16" width="16" height="16"/></svg>
<span style="left:1507.2px;top:484.0px;line-height:16px;font-size:11px;color:#383838;letter-spacing:0.122px;transform:scaleX(.9999);">Complex1 degradation</span>
<svg style="left:1474px;top:506px;" width="6" height="9" viewBox="0 0 6 9"><path d="M.8 .6 L5 4.5 L.8 8.4 Z" fill="#777"/></svg>
<svg style="left:1486px;top:501.5px" width="16" height="16"><use href="#react16" width="16" height="16"/></svg>
<span style="left:1506.45px;top:502.0px;line-height:16px;font-size:11px;color:#383838;transform:scaleX(0.9672);">Complex1 internalization</span>
<svg style="left:1474px;top:524px;" width="6" height="9" viewBox="0 0 6 9"><path d="M.8 .6 L5 4.5 L.8 8.4 Z" fill="#777"/></svg>
<svg style="left:1486px;top:519.5px" width="16" height="16"><use href="#react16" width="16" height="16"/></svg>
<span style="left:1506.45px;top:520.0px;line-height:16px;font-size:11px;color:#383838;transform:scaleX(0.9533);">Complex1 recycling</span>
<svg style="left:1474px;top:542px;" width="6" height="9" viewBox="0 0 6 9"><path d="M.8 .6 L5 4.5 L.8 8.4 Z" fill="#777"/></svg>
<svg style="left:1486px;top:537.5px" width="16" height="16"><use href="#react16" width="16" height="16"/></svg>
<span style="left:1506.45px;top:538.0px;line-height:16px;font-size:11px;color:#383838;transform:scaleX(0.9756);">Complex1 Target2 binding</span>
<svg style="left:1474px;top:560px;" width="6" height="9" viewBox="0 0 6 9"><path d="M.8 .6 L5 4.5 L.8 8.4 Z" fill="#777"/></svg>
<svg style="left:1486px;top:555.5px" width="16" height="16"><use href="#react16" width="16" height="16"/></svg>
<span style="left:1506.45px;top:556.0px;line-height:16px;font-size:11px;color:#383838;transform:scaleX(0.9712);">Complex2 degradation</span>
<svg style="left:1474px;top:578px;" width="6" height="9" viewBox="0 0 6 9"><path d="M.8 .6 L5 4.5 L.8 8.4 Z" fill="#777"/></svg>
<svg style="left:1486px;top:573.5px" width="16" height="16"><use href="#react16" width="16" height="16"/></svg>
<span style="left:1506.45px;top:574.0px;line-height:16px;font-size:11px;color:#383838;transform:scaleX(0.9672);">Complex2 internalization</span>
<svg style="left:1474px;top:596px;" width="6" height="9" viewBox="0 0 6 9"><path d="M.8 .6 L5 4.5 L.8 8.4 Z" fill="#777"/></svg>
<svg style="left:1486px;top:591.5px" width="16" height="16"><use href="#react16" width="16" height="16"/></svg>
<span style="left:1506.45px;top:592.0px;line-height:16px;font-size:11px;color:#383838;transform:scaleX(0.9533);">Complex2 recycling</span>
<svg style="left:1474px;top:614px;" width="6" height="9" viewBox="0 0 6 9"><path d="M.8 .6 L5 4.5 L.8 8.4 Z" fill="#777"/></svg>
<svg style="left:1486px;top:609.5px" width="16" height="16"><use href="#react16" width="16" height="16"/></svg>
<span style="left:1506.45px;top:610.0px;line-height:16px;font-size:11px;color:#383838;transform:scaleX(0.9756);">Complex2 Target1 binding</span>
<svg style="left:1474px;top:632px;" width="6" height="9" viewBox="0 0 6 9"><path d="M.8 .6 L5 4.5 L.8 8.4 Z" fill="#777"/></svg>
<svg style="left:1486px;top:627.5px" width="16" height="16"><use href="#react16" width="16" height="16"/></svg>
<span style="left:1506.45px;top:628.0px;line-height:16px;font-size:11px;color:#383838;letter-spacing:0.036px;transform:scaleX(.9999);">Target1 degradation</span>
<svg style="left:1474px;top:650px;" width="6" height="9" viewBox="0 0 6 9"><path d="M.8 .6 L5 4.5 L.8 8.4 Z" fill="#777"/></svg>
<svg style="left:1486px;top:645.5px" width="16" height="16"><use href="#react16" width="16" height="16"/></svg>
<span style="left:1506.45px;top:646.0px;line-height:16px;font-size:11px;color:#383838;transform:scaleX(0.9988);">Target1 internalization</span>
<svg style="left:1474px;top:668px;" width="6" height="9" viewBox="0 0 6 9"><path d="M.8 .6 L5 4.5 L.8 8.4 Z" fill="#777"/></svg>
<svg style="left:1486px;top:663.5px" width="16" height="16"><use href="#react16" width="16" height="16"/></svg>
<span style="left:1506.45px;top:664.0px;line-height:16px;font-size:11px;color:#383838;transform:scaleX(0.9921);">Target1 recycling</span>
<svg style="left:1486px;top:681.5px" width="16" height="16"><use href="#react16" width="16" height="16"/></svg>
<span style="left:1506.45px;top:682.0px;line-height:16px;font-size:11px;color:#383838;transform:scaleX(0.9987);">Target1 synthesis</span>
<svg style="left:1474px;top:704px;" width="6" height="9" viewBox="0 0 6 9"><path d="M.8 .6 L5 4.5 L.8 8.4 Z" fill="#777"/></svg>
<svg style="left:1486px;top:699.5px" width="16" height="16"><use href="#react16" width="16" height="16"/></svg>
<span style="left:1506.45px;top:700.0px;line-height:16px;font-size:11px;color:#383838;letter-spacing:0.036px;transform:scaleX(.9999);">Target2 degradation</span>
<svg style="left:1474px;top:722px;" width="6" height="9" viewBox="0 0 6 9"><path d="M.8 .6 L5 4.5 L.8 8.4 Z" fill="#777"/></svg>
<svg style="left:1486px;top:717.5px" width="16" height="16"><use href="#react16" width="16" height="16"/></svg>
<span style="left:1506.45px;top:718.0px;line-height:16px;font-size:11px;color:#383838;transform:scaleX(0.9988);">Target2 internalization</span>
<svg style="left:1474px;top:740px;" width="6" height="9" viewBox="0 0 6 9"><path d="M.8 .6 L5 4.5 L.8 8.4 Z" fill="#777"/></svg>
<svg style="left:1486px;top:735.5px" width="16" height="16"><use href="#react16" width="16" height="16"/></svg>
<span style="left:1506.45px;top:736.0px;line-height:16px;font-size:11px;color:#383838;transform:scaleX(0.9921);">Target2 recycling</span>
<svg style="left:1486px;top:753.5px" width="16" height="16"><use href="#react16" width="16" height="16"/></svg>
<span style="left:1506.45px;top:754.0px;line-height:16px;font-size:11px;color:#383838;transform:scaleX(0.9987);">Target2 synthesis</span>
<div style="left:1467px;top:770px;width:393px;height:11px;overflow:hidden">
<svg style="left:7px;top:6px;" width="6" height="9" viewBox="0 0 6 9"><path d="M.8 .6 L5 4.5 L.8 8.4 Z" fill="#777"/></svg>
<svg style="left:19px;top:2px" width="16" height="16"><use href="#react16" width="16" height="16"/></svg>
<span style="left:39.45px;top:2.0px;line-height:16px;font-size:11px;color:#383838;transform:scaleX(0.9780);">Trimer degradation</span>
</div>
<div style="left:1860px;top:483px;width:17px;height:298px;background:#f0f0f0"></div>
<div style="left:1860px;top:500px;width:17px;height:221px;background:#c5c5c5"></div>
<svg style="left:1864px;top:488px;" width="9" height="6" viewBox="0 0 9 6"><path d="M1 5 L4.5 1.2 L8 5" fill="none" stroke="#555" stroke-width="1.5"/></svg>
<svg style="left:1864px;top:770px;" width="9" height="6" viewBox="0 0 9 6"><path d="M1 1 L4.5 4.8 L8 1" fill="none" stroke="#555" stroke-width="1.5"/></svg>
<span style="left:987.2px;top:803.0px;line-height:16px;font-size:11px;color:#383838;transform:scaleX(0.9540);">Used Calculation Methods</span>
<div style="left:988px;top:821px;width:908px;height:135px;background:#fff;border:1px solid #c6c6c6"></div>
<div style="left:989px;top:822px;width:906px;height:18px;background:#f7f7f7"></div>
<div style="left:989px;top:840px;width:906px;height:1px;background:#c6c6c6"></div>
<div style="left:1007px;top:822px;width:1px;height:18px;background:#c6c6c6"></div>
<div style="left:1450px;top:822px;width:1px;height:18px;background:#c6c6c6"></div>
<span style="left:1011.2px;top:822.0px;line-height:16px;font-size:11px;color:#383838;transform:scaleX(0.9968);">Category</span>
<span style="left:1454.2px;top:822.0px;line-height:16px;font-size:11px;color:#383838;transform:scaleX(0.9610);">Calculation method</span>
<span style="left:987.2px;top:962.0px;line-height:16px;font-size:11px;color:#383838;transform:scaleX(0.9728);">Description:</span>
<div style="left:1050px;top:960px;width:830px;height:20px;background:#fff;border:1px solid #ababab"></div>
<div style="left:1879px;top:960px;width:17px;height:20px;background:#f3f3f3;border:1px solid #ababab"></div>
<svg style="left:1883.0px;top:967.0px;" width="9" height="6" viewBox="0 0 9 6"><path d="M1 1 L4.5 4.8 L8 1" fill="none" stroke="#555" stroke-width="1.5"/></svg>
<div style="left:0px;top:1004px;width:1920px;height:28px;background:#1b478a"></div>
<span style="left:155.7px;top:1010.0px;line-height:16px;font-size:11px;color:#fff;transform:scaleX(0.9945);">Project: Undefined</span>
<span style="left:270.7px;top:1010.0px;line-height:16px;font-size:11px;color:#fff;transform:scaleX(0.9777);">Amount based reactions</span>
<span style="left:1837.45px;top:1010.0px;line-height:16px;font-size:11px;color:#fff;transform:scaleX(0.9667);">12.1 - Build 227</span>
<div style="left:0px;top:1032px;width:1920px;height:48px;background:#eeeeee"></div>
<div style="left:0px;top:1032px;width:1920px;height:1px;background:#d6d6d6"></div>
<svg style="left:16px;top:1036px;" width="36" height="34" viewBox="0 0 36 34"><defs><linearGradient id="mn" x1="0" y1="0" x2="0" y2="1"><stop offset="0" stop-color="#fbc02d"/><stop offset="1" stop-color="#f57c00"/></linearGradient><linearGradient id="cl" x1="0" y1="0" x2="0" y2="1"><stop offset="0" stop-color="#eef3fc"/><stop offset="1" stop-color="#a9c4ee"/></linearGradient></defs>
<path d="M8.21 12.86 A10.5 10.5 0 1 0 26.52 16.16 A9.4 9.4 0 0 1 8.21 12.86 Z" fill="url(#mn)"/>
<path d="M6.4 17.3 a3 3 0 0 1 .6 -5.9 a4.6 4.6 0 0 1 8.6 -1.2 a3.6 3.6 0 0 1 1.6 7.1 Z" fill="url(#cl)"/>
<circle cx="23.3" cy="11" r="7.8" fill="#c42b1c"/><text x="23.3" y="15.2" text-anchor="middle" font-family="Liberation Sans" font-weight="700" font-size="11.5" fill="#fff">4</text></svg>
<svg style="left:488px;top:1048px;" width="17" height="17" viewBox="0 0 17 17"><defs><linearGradient id="wg" x1="0" y1="0" x2="1" y2="1"><stop offset="0" stop-color="#4fc3f7"/><stop offset="1" stop-color="#0a6fd0"/></linearGradient></defs><g fill="url(#wg)"><rect x=".8" y=".8" width="7.2" height="7.2"/><rect x="8.8" y=".8" width="7.2" height="7.2"/><rect x=".8" y="8.8" width="7.2" height="7.2"/><rect x="8.8" y="8.8" width="7.2" height="7.2"/></g></svg>
<div style="left:514px;top:1040px;width:220px;height:32px;background:#fafafa;border:1px solid #dcdcdc;border-radius:16px;box-shadow:0 1px 1px rgba(0,0,0,.08)"></div>
<svg style="left:524px;top:1047px;" width="18" height="18" viewBox="0 0 18 18"><circle cx="7.8" cy="8" r="5.3" fill="none" stroke="#1f1f1f" stroke-width="1.7"/><path d="M11.6 12 L15.4 16" stroke="#1f1f1f" stroke-width="1.9" stroke-linecap="round"/></svg>
<span style="left:551.0px;top:1048.0px;line-height:16px;font-size:14.5px;color:#5a5a5a;transform:scaleX(0.8813);">Search</span>
<svg style="left:743px;top:1048px;" width="18" height="17" viewBox="0 0 18 17"><rect x="4.6" y=".8" width="12" height="11.6" rx="1.2" fill="#f6f6f6" stroke="#e2e2e2" stroke-width=".6"/><rect x="5.5" y="4.5" width="7" height="7" fill="#cfcfcf"/><path d="M1 4.5 H5.5 V11.5 H12.5 V16 H1 Z" fill="#1d1d1d"/></svg>
<svg style="left:775.0px;top:1047.0px;" width="18" height="18" viewBox="0 0 18 18"><defs><linearGradient id="cp1" x1="0" y1="0" x2="1" y2="1"><stop offset="0" stop-color="#2a8af6"/><stop offset=".5" stop-color="#37c978"/><stop offset="1" stop-color="#f9c21b"/></linearGradient><linearGradient id="cp2" x1="0" y1="1" x2="1" y2="0"><stop offset="0" stop-color="#f0582f"/><stop offset=".5" stop-color="#d948b8"/><stop offset="1" stop-color="#6b5cf5"/></linearGradient></defs>
<path d="M5.8 2 H11 Q12.6 2 12.2 3.6 L10.6 9.6 Q10.2 11 8.6 11 H3.4 Q.4 11 1.2 8 L2.4 4 Q3 2 5.8 2 Z" fill="url(#cp1)"/>
<path d="M12.2 16 H7 Q5.4 16 5.8 14.4 L7.4 8.4 Q7.8 7 9.4 7 H14.6 Q17.6 7 16.8 10 L15.6 14 Q15 16 12.2 16 Z" fill="url(#cp2)"/><path d="M7.6 7.8 Q8 7 9.4 7 H10.9 L10.4 9.8 Q10 11 8.6 11 H6.8 Z" fill="#fff" opacity=".85"/></svg>
<svg style="left:807.0px;top:1047.0px;" width="18" height="18" viewBox="0 0 18 18"><path d="M1 3 Q1 2 2 2 H6 L7.6 3.6 H16 Q17 3.6 17 4.6 V7 H1 Z" fill="#e6a700"/><rect x="1" y="5" width="16" height="11" rx="1" fill="#fcd34d"/><rect x="1" y="9" width="16" height="7" rx="1" fill="#f9c22e"/><path d="M5 13.2 H13 Q14 13.2 14 14.2 V16 H4 V14.2 Q4 13.2 5 13.2 Z" fill="#1e88e5"/></svg>
<div style="left:814px;top:1072px;width:4px;height:3px;background:#8a8a8a;border-radius:1.5px"></div>
<svg style="left:839.0px;top:1047.0px;" width="18" height="18" viewBox="0 0 18 18"><defs><linearGradient id="ed" x1="0" y1="0" x2="1" y2="1"><stop offset="0" stop-color="#35c1f1"/><stop offset=".5" stop-color="#2fb35a"/><stop offset="1" stop-color="#0f5fb5"/></linearGradient></defs><path d="M9 1 A8 8 0 0 1 17 9 Q17 12 13.6 12 Q10 12 10 9.6 Q10 8 11.2 7.4 Q9.6 5 6.6 6 Q3 7.4 3 11 Q3 14.6 7 16.6 A8 8 0 0 1 9 1 Z" fill="url(#ed)"/><path d="M3 11 Q3.4 17 10 17 Q14 17 16.4 12.6 Q12 15 9 13 Q6.6 11.4 7 8 Q3.6 8 3 11 Z" fill="#1766c4"/><rect x="0.5" y="11" width="8.4" height="6.4" rx=".8" fill="#b86614"/><rect x="0.5" y="13.4" width="8.4" height="1" fill="#7a3f08"/><rect x="3" y="9.9" width="3.4" height="1.6" fill="none" stroke="#b86614" stroke-width=".8"/></svg>
<div style="left:846px;top:1072px;width:4px;height:3px;background:#8a8a8a;border-radius:1.5px"></div>
<svg style="left:871.0px;top:1047.0px;" width="18" height="18" viewBox="0 0 18 18"><path d="M5.5 4 V2.6 Q5.5 1.2 7 1.2 H11 Q12.5 1.2 12.5 2.6 V4" fill="none" stroke="#35a6ea" stroke-width="1.2"/><rect x="1" y="3.6" width="16" height="13.4" rx="2" fill="#123e7c"/><rect x="5" y="6.6" width="3.6" height="3.6" fill="#f25022"/><rect x="9.4" y="6.6" width="3.6" height="3.6" fill="#7fba00"/><rect x="5" y="11" width="3.6" height="3.6" fill="#00a4ef"/><rect x="9.4" y="11" width="3.6" height="3.6" fill="#ffb900"/></svg>
<svg style="left:903.0px;top:1047.0px;" width="18" height="18" viewBox="0 0 18 18"><rect x="1" y="1" width="16" height="16" fill="#0e7ad1"/><circle cx="9" cy="9" r="6" fill="none" stroke="#fff" stroke-width="1"/><text x="9" y="10.8" text-anchor="middle" font-family="Liberation Sans" font-weight="700" font-size="4.6" fill="#fff">DELL</text></svg>
<svg style="left:935.0px;top:1047.0px;" width="18" height="18" viewBox="0 0 18 18"><path d="M5 6 L12 1.6 L17 5 V14.6 Q17 16 15.6 16 H6 Z" fill="#1490df"/><path d="M6 9 L17 5 V14.6 Q17 16 15.6 16 H6 Z" fill="#28a8ea"/><path d="M6 16 L17 8 V14.6 Q17 16 15.6 16 Z" fill="#0a5fb4"/><rect x="1" y="6.4" width="9" height="9" rx="1.2" fill="#0f5fbf"/><text x="5.5" y="13.6" text-anchor="middle" font-family="Liberation Sans" font-weight="700" font-size="7.4" fill="#fff">O</text></svg>
<div style="left:942px;top:1072px;width:4px;height:3px;background:#8a8a8a;border-radius:1.5px"></div>
<svg style="left:949px;top:1043px;" width="6" height="6" viewBox="0 0 6 6"><circle cx="3" cy="3" r="2.2" fill="#1a73d8"/></svg>
<svg style="left:967.0px;top:1047.0px;" width="18" height="18" viewBox="0 0 18 18"><path d="M1.4 8.6 L4 6 L7.4 9.4 L4.8 12 Z" fill="#195abd"/><path d="M4.8 12 L14.4 2.4 L17 5 L7.4 14.6 Z" fill="#2987e6"/><path d="M4.8 12 L7.4 9.4 L10 12 L7.4 14.6 Z" fill="#1f6fd0"/></svg>
<svg style="left:981px;top:1043px;" width="6" height="6" viewBox="0 0 6 6"><circle cx="3" cy="3" r="2.2" fill="#1a73d8"/></svg>
<svg style="left:999.0px;top:1047.0px;" width="18" height="18" viewBox="0 0 18 18"><circle cx="13.6" cy="5" r="2.3" fill="#7b83eb"/><circle cx="8.6" cy="4" r="2.9" fill="#5059c9"/><path d="M11.4 7.4 H16.2 Q17 7.4 17 8.2 V12.6 Q17 15.4 14.4 15.4 Q12.6 15.4 11.4 14 Z" fill="#7b83eb"/><path d="M4.6 7.4 H12.4 V13 Q12.4 17 8.4 17 Q4.6 17 4.6 13 Z" fill="#5b5fc7"/><rect x="1" y="6.8" width="8" height="8" rx="1.2" fill="#4b53bc"/><text x="5" y="13.2" text-anchor="middle" font-family="Liberation Sans" font-weight="700" font-size="6.6" fill="#fff">T</text></svg>
<div style="left:1006px;top:1072px;width:4px;height:3px;background:#8a8a8a;border-radius:1.5px"></div>
<svg style="left:1013px;top:1043px;" width="6" height="6" viewBox="0 0 6 6"><circle cx="3" cy="3" r="2.2" fill="#1a73d8"/></svg>
<svg style="left:1031.0px;top:1047.0px;" width="18" height="18" viewBox="0 0 18 18"><rect x="1" y="1" width="16" height="16" fill="#fbfbfb"/><rect x="2.4" y="2.4" width="13.2" height="13.2" rx="1.6" fill="#3aa5f2"/><rect x="2.4" y="2.4" width="13.2" height="3.4" rx="1.2" fill="#1976d2"/><g fill="#fff"><rect x="4.6" y="7.6" width="1.8" height="1.8"/><rect x="8.1" y="7.6" width="1.8" height="1.8"/><rect x="11.6" y="7.6" width="1.8" height="1.8"/><rect x="4.6" y="11" width="1.8" height="1.8"/><rect x="8.1" y="11" width="1.8" height="1.8"/><rect x="11.6" y="11" width="1.8" height="1.8"/></g></svg>
<svg style="left:1063.0px;top:1047.0px;" width="18" height="18" viewBox="0 0 18 18"><circle cx="9" cy="9" r="8" fill="#1ed760"/><g fill="none" stroke="#111" stroke-linecap="round"><path d="M4.4 6.6 Q9.4 5.2 14 7.6" stroke-width="1.7"/><path d="M4.9 9.4 Q9.2 8.2 13 10.2" stroke-width="1.4"/><path d="M5.4 12 Q9 11 12 12.6" stroke-width="1.2"/></g></svg>
<div style="left:1070px;top:1072px;width:4px;height:3px;background:#8a8a8a;border-radius:1.5px"></div>
<svg style="left:1095.0px;top:1047.0px;" width="18" height="18" viewBox="0 0 18 18"><circle cx="9" cy="9" r="8" fill="#fbbc05"/><path d="M9 9 L2.07 5 A8 8 0 0 1 15.93 5 Z" fill="#ea4335"/><path d="M2.07 5 A8 8 0 0 0 9 17 L12.5 11 L5.5 11 Z" fill="#34a853"/><path d="M2.07 5 L5.6 11 L9 9 Z" fill="#34a853"/><path d="M15.93 5 H9 L12.5 11 L9 17 A8 8 0 0 0 15.93 5 Z" fill="#fbbc05"/><circle cx="9" cy="9" r="3.9" fill="#fff"/><circle cx="9" cy="9" r="3.1" fill="#4285f4"/></svg>
<div style="left:1102px;top:1072px;width:4px;height:3px;background:#8a8a8a;border-radius:1.5px"></div>
<svg style="left:1127.0px;top:1047.0px;" width="18" height="18" viewBox="0 0 18 18"><defs><linearGradient id="wd" x1="0" y1="0" x2="0" y2="1"><stop offset="0" stop-color="#41c4f7"/><stop offset=".5" stop-color="#2b7cd3"/><stop offset="1" stop-color="#103f91"/></linearGradient></defs><rect x="4.4" y="1.6" width="12.6" height="14.8" rx="1.6" fill="url(#wd)"/><rect x="1" y="6" width="8.6" height="8.6" rx="1.2" fill="#185abd"/><text x="5.3" y="12.8" text-anchor="middle" font-family="Liberation Sans" font-weight="700" font-size="6.4" fill="#fff">W</text></svg>
<div style="left:1134px;top:1072px;width:4px;height:3px;background:#8a8a8a;border-radius:1.5px"></div>
<svg style="left:1159.0px;top:1047.0px;" width="18" height="18" viewBox="0 0 18 18"><circle cx="10" cy="9" r="7.6" fill="#ed6c47"/><path d="M10 1.4 A7.6 7.6 0 0 1 17.6 9 H10 Z" fill="#ff8f6b"/><path d="M10 9 H17.6 A7.6 7.6 0 0 1 6 15.4 Z" fill="#d35230"/><rect x="1" y="5.6" width="8.6" height="8.6" rx="1.2" fill="#c43e1c"/><text x="5.3" y="12.4" text-anchor="middle" font-family="Liberation Sans" font-weight="700" font-size="6.4" fill="#fff">P</text></svg>
<div style="left:1166px;top:1072px;width:4px;height:3px;background:#8a8a8a;border-radius:1.5px"></div>
<svg style="left:1191.0px;top:1047.0px;" width="18" height="18" viewBox="0 0 18 18"><rect x="1.4" y="1.4" width="15.2" height="15.2" rx="1.5" fill="#2b86d4"/><rect x="1.4" y="1.4" width="15.2" height="7" fill="#5aa9e6" opacity=".5"/><g stroke="#fff" stroke-width="1.1" fill="none"><path d="M4.4 5 L11 10 L15 4.6 M11 10 L7.4 14.6 M11 10 L15 14.4 M4 10 H8"/></g><circle cx="4.6" cy="4.8" r="1.7" fill="#ee5a2a"/><circle cx="15.4" cy="3.6" r="1.8" fill="#fff"/><circle cx="7" cy="15" r="1.5" fill="#8fd14f"/><circle cx="15" cy="14.6" r="1.5" fill="#1d3a9a"/><circle cx="11" cy="10" r="1.9" fill="#fff"/><rect x="3" y="9.2" width="1.8" height="1.8" fill="#8fd14f"/></svg>
<div style="left:1198px;top:1072px;width:4px;height:3px;background:#8a8a8a;border-radius:1.5px"></div>
<svg style="left:1223.0px;top:1047.0px;" width="18" height="18" viewBox="0 0 18 18"><path d="M9 1.4 A7.5 7.5 0 1 1 5 15.2 L1.4 16.6 L2.7 13 A7.5 7.5 0 0 1 9 1.4 Z" fill="#fff" stroke="#1fa855" stroke-width="1.5"/><path d="M6 5.2 Q6.8 4.6 7.3 5.6 L7.8 6.8 Q8 7.4 7.4 7.9 Q8.4 10 10.5 10.8 Q11 10.1 11.6 10.3 L12.9 11 Q13.5 11.4 13 12.2 Q12 13.6 10 12.9 Q6.4 11.6 5.5 8 Q5.2 6.2 6 5.2 Z" fill="#1fa855"/></svg>
<div style="left:1230px;top:1072px;width:4px;height:3px;background:#8a8a8a;border-radius:1.5px"></div>
<svg style="left:1255.0px;top:1047.0px;" width="18" height="18" viewBox="0 0 18 18"><rect x="5" y="1.6" width="12" height="14.8" rx="1.4" fill="#21a366"/><rect x="11" y="1.6" width="6" height="5" fill="#33c481"/><rect x="5" y="6.6" width="6" height="5" fill="#107c41"/><rect x="11" y="11.4" width="6" height="5" fill="#185c37"/><rect x="1" y="5.6" width="8.6" height="8.6" rx="1.2" fill="#107c41"/><text x="5.3" y="12.4" text-anchor="middle" font-family="Liberation Sans" font-weight="700" font-size="6.4" fill="#fff">X</text></svg>
<div style="left:1262px;top:1072px;width:4px;height:3px;background:#8a8a8a;border-radius:1.5px"></div>
<svg style="left:1287.0px;top:1047.0px;" width="18" height="18" viewBox="0 0 18 18"><rect x="1.6" y="1.6" width="14.8" height="14.8" rx="2.2" fill="#b30b00"/><path d="M4 13.4 Q6.6 11.6 8.2 7.6 Q9.2 4.6 8.4 4.2 Q7.4 4.2 8.2 7 Q9.4 10.4 14 11.6 Q14.6 10.4 12 10.4 Q8 10.6 4 13.4 Z" fill="none" stroke="#fff" stroke-width="1.1" stroke-linejoin="round"/></svg>
<div style="left:1294px;top:1072px;width:4px;height:3px;background:#8a8a8a;border-radius:1.5px"></div>
<div style="left:1315px;top:1036px;width:25px;height:40px;background:#f9f9f9;border:1px solid #e3e3e3;border-radius:4px"></div>
<svg style="left:1319.0px;top:1047.0px;" width="18" height="18" viewBox="0 0 18 18"><rect x="1.4" y="1.4" width="15.2" height="15.2" rx="1.5" fill="#2b86d4"/><rect x="1.4" y="1.4" width="15.2" height="7" fill="#5aa9e6" opacity=".5"/><g stroke="#fff" stroke-width="1.1" fill="none"><path d="M4.4 5 L11 10 L15 4.6 M11 10 L7.4 14.6 M11 10 L15 14.4 M4 10 H8"/></g><circle cx="4.6" cy="4.8" r="1.7" fill="#ee5a2a"/><circle cx="15.4" cy="3.6" r="1.8" fill="#fff"/><circle cx="7" cy="15" r="1.5" fill="#8fd14f"/><circle cx="15" cy="14.6" r="1.5" fill="#1d3a9a"/><circle cx="11" cy="10" r="1.9" fill="#fff"/><rect x="3" y="9.2" width="1.8" height="1.8" fill="#8fd14f"/></svg>
<div style="left:1323px;top:1072px;width:11px;height:3px;background:#1a73d8;border-radius:1.5px"></div>
<svg style="left:1351.0px;top:1047.0px;" width="18" height="18" viewBox="0 0 18 18"><rect x="1.4" y="1.4" width="15.2" height="15.2" rx="1.2" fill="#1c8fd6"/><path d="M1.4 6 C7 7 13 11 16.6 16.6 H1.4 Z" fill="#4caf50"/><path d="M1.4 4.6 C8 5.4 14 10 16.6 15 V16.6 C13 11 7 7 1.4 6 Z" fill="#cfeee0"/><path d="M4 1.4 C10 3 15 7 16.6 11 V13.4 C14 8 9 4 2 1.4 Z" fill="#8fd0f4" opacity=".7"/></svg>
<div style="left:1358px;top:1072px;width:4px;height:3px;background:#8a8a8a;border-radius:1.5px"></div>
<svg style="left:1383.0px;top:1047.0px;" width="18" height="18" viewBox="0 0 18 18"><rect x="3" y="1" width="12" height="16" rx=".8" fill="#57606e"/><rect x="4.6" y="2.6" width="8.8" height="3" fill="#4cc2f1"/><g fill="#e8eaee"><rect x="4.6" y="7" width="2.2" height="2"/><rect x="7.9" y="7" width="2.2" height="2"/><rect x="4.6" y="10.2" width="2.2" height="2"/><rect x="7.9" y="10.2" width="2.2" height="2"/><rect x="4.6" y="13.4" width="2.2" height="2"/><rect x="7.9" y="13.4" width="2.2" height="2"/></g><g fill="#2b90d9"><rect x="11.2" y="7" width="2.2" height="2"/><rect x="11.2" y="10.2" width="2.2" height="5.2"/></g></svg>
<div style="left:1390px;top:1072px;width:4px;height:3px;background:#8a8a8a;border-radius:1.5px"></div>
<svg style="left:1415.0px;top:1047.0px;" width="18" height="18" viewBox="0 0 18 18"><rect x="2" y="2.6" width="14" height="12.8" rx="2" fill="#2a0a6e"/><rect x="2" y="2.6" width="14" height="12.8" rx="2" fill="none" stroke="#4a1ea8" stroke-width=".8"/><text x="9" y="12.6" text-anchor="middle" font-family="Liberation Sans" font-weight="700" font-size="9.6" fill="#fff">G</text><path d="M11 11 l2.6 2.4" stroke="#fff" stroke-width="1.2"/></svg>
<div style="left:1422px;top:1072px;width:4px;height:3px;background:#8a8a8a;border-radius:1.5px"></div>
<svg style="left:1620px;top:1052px;" width="12" height="8" viewBox="0 0 12 8"><path d="M1.2 6.6 L6 1.8 L10.8 6.6" fill="none" stroke="#222" stroke-width="1.5"/></svg>
<svg style="left:1649px;top:1049px;" width="18" height="13" viewBox="0 0 18 13"><defs><linearGradient id="od" x1="0" y1="0" x2="1" y2="1"><stop offset="0" stop-color="#1466c4"/><stop offset="1" stop-color="#2ea7ee"/></linearGradient></defs><path d="M4 12 A3.4 3.4 0 0 1 3.4 5.4 A4.8 4.8 0 0 1 12 3.6 A3.2 3.2 0 0 1 16 6.6 A2.8 2.8 0 0 1 14.6 12 Z" fill="url(#od)"/><path d="M3 9 L10 4.6 L16.4 8.4 Q17 11 14.6 12 H4 Q2.4 11 3 9 Z" fill="#3db4f2" opacity=".55"/></svg>
<svg style="left:1683px;top:1047px;" width="14" height="18" viewBox="0 0 14 18"><rect x="4.4" y="1" width="5.2" height="9.6" rx="2.6" fill="none" stroke="#1a6fc9" stroke-width="1.5"/><path d="M1.8 8 A5.2 5.2 0 0 0 12.2 8 M7 13.4 V16.4" fill="none" stroke="#1a6fc9" stroke-width="1.5" stroke-linecap="round"/></svg>
<span style="left:1716.7px;top:1049.0px;line-height:16px;font-size:11.5px;color:#1b1b1b;transform:scaleX(0.9108);">ENG</span>
<svg style="left:1757px;top:1048px;" width="18" height="14" viewBox="0 0 18 14"><g fill="none" stroke="#1b1b1b" stroke-width="1.4" stroke-linecap="round"><path d="M1.4 5.4 A11 11 0 0 1 16.6 5.4"/><path d="M3.8 8 A7.6 7.6 0 0 1 14.2 8"/><path d="M6.2 10.4 A4 4 0 0 1 11.8 10.4"/></g><circle cx="9" cy="12.4" r="1.2" fill="#1b1b1b"/></svg>
<svg style="left:1781px;top:1049px;" width="16" height="14" viewBox="0 0 16 14"><path d="M1 5 H3.6 L7 2 V12 L3.6 9 H1 Z" fill="none" stroke="#1b1b1b" stroke-width="1.2" stroke-linejoin="round"/><path d="M9 4.6 A3.4 3.4 0 0 1 9 9.4 M10.8 2.8 A6 6 0 0 1 10.8 11.2" fill="none" stroke="#1b1b1b" stroke-width="1.2" stroke-linecap="round"/><path d="M12.8 1.4 A8.4 8.4 0 0 1 12.8 12.6" fill="none" stroke="#b5b5b5" stroke-width="1"/></svg>
<svg style="left:1805px;top:1047px;" width="18" height="15" viewBox="0 0 18 15"><rect x="3" y="5" width="11.6" height="8" rx="1.6" fill="none" stroke="#1b1b1b" stroke-width="1.3"/><rect x="15" y="7.4" width="1.8" height="3.2" rx=".8" fill="#1b1b1b"/><path d="M1 9.6 Q1.2 3.6 6.4 1 Q9.4 4.4 6.2 8.4 L8 8.6 Q5 12.4 1.4 11.6 Z" fill="#1b1b1b"/><path d="M2.4 10.4 Q4 7 6 5" stroke="#eee" stroke-width=".7" fill="none"/></svg>
<span style="left:1872.2px;top:1040.0px;line-height:16px;font-size:12px;color:#1b1b1b;transform:scaleX(0.9424);">13:52</span>
<span style="left:1839.2px;top:1056.0px;line-height:16px;font-size:12px;color:#1b1b1b;letter-spacing:0.137px;transform:scaleX(.9999);">19/12/2025</span>
<svg style="left:10px;top:710px" width="260" height="260" viewBox="0 0 1080 1080">
<defs>
<clipPath id="camclip"><circle cx="669" cy="395" r="627"/></clipPath>
<clipPath id="camrect"><rect x="0" y="42" width="1022" height="1040"/></clipPath>
<linearGradient id="wall" x1="0.1" y1="0" x2=".4" y2="1"><stop offset="0" stop-color="#a29d90"/><stop offset=".2" stop-color="#b5b1a5"/><stop offset=".45" stop-color="#cfcdc7"/><stop offset="1" stop-color="#dddcd7"/></linearGradient>
<linearGradient id="wall2" x1="0" y1="0" x2="1" y2="0"><stop offset=".5" stop-color="#e2e2dc" stop-opacity="0"/><stop offset="1" stop-color="#e2e2dc" stop-opacity=".7"/></linearGradient>
<radialGradient id="skin" cx=".68" cy=".2" r=".8"><stop offset="0" stop-color="#f0d0bc"/><stop offset=".16" stop-color="#e0b098"/><stop offset=".4" stop-color="#cb9478"/><stop offset=".75" stop-color="#b88268"/><stop offset="1" stop-color="#9c6a54"/></radialGradient>
<linearGradient id="sw" x1="0" y1="0" x2="1" y2="1"><stop offset="0" stop-color="#2a2c22"/><stop offset="1" stop-color="#40443a"/></linearGradient>
<filter id="b3" x="-20%" y="-20%" width="140%" height="140%"><feGaussianBlur stdDeviation="4"/></filter>
<filter id="b6" x="-20%" y="-20%" width="140%" height="140%"><feGaussianBlur stdDeviation="9"/></filter>
<filter id="b12" x="-30%" y="-30%" width="160%" height="160%"><feGaussianBlur stdDeviation="18"/></filter>
<filter id="sh" x="-20%" y="-20%" width="140%" height="140%"><feGaussianBlur stdDeviation="18"/></filter>
<filter id="hairf" x="-10%" y="-10%" width="120%" height="120%"><feTurbulence type="fractalNoise" baseFrequency="0.035" numOctaves="2" seed="7" result="n"/><feDisplacementMap in="SourceGraphic" in2="n" scale="38" xChannelSelector="R" yChannelSelector="G"/><feGaussianBlur stdDeviation="2.5"/></filter>
<filter id="knit" x="0" y="0" width="100%" height="100%"><feTurbulence type="fractalNoise" baseFrequency="0.09 0.05" numOctaves="2" seed="3" result="n"/><feColorMatrix in="n" type="matrix" values="0 0 0 0 0  0 0 0 0 0  0 0 0 0 0  0 0 0 -1.6 1.0" result="a"/><feComposite in="SourceGraphic" in2="a" operator="in"/></filter>
</defs>
<g clip-path="url(#camrect)"><circle cx="669" cy="420" r="630" fill="#000" opacity=".13" filter="url(#sh)"/></g>
<g clip-path="url(#camrect)"><g clip-path="url(#camclip)">
<rect x="0" y="0" width="1080" height="1080" fill="url(#wall)"/><rect x="0" y="0" width="1080" height="1080" fill="url(#wall2)"/>
<!-- right side light strip / radiator -->
<rect x="745" y="485" width="120" height="215" fill="#c9c9c3" filter="url(#b3)"/>
<rect x="805" y="490" width="22" height="205" fill="#b9b9b2" filter="url(#b3)"/>
<rect x="862" y="480" width="170" height="230" fill="#e7e7e3"/>
<g stroke="#d0d0ca" stroke-width="5"><path d="M880 500 V690 M900 500 V690 M920 500 V690 M940 500 V690 M960 500 V690 M980 500 V690 M1000 500 V690"/></g>
<rect x="862" y="480" width="170" height="12" fill="#f3f3f1"/>
<path d="M905 622 L1030 612 V800 L918 722 Z" fill="#e4e6e8"/>
<path d="M905 622 L918 722 L900 700 Z" fill="#b8b8b4"/>
<path d="M896 700 Q980 715 1022 790 V870 L880 760 Z" fill="#1f1f23" filter="url(#b3)"/>
<!-- chair headrest -->
<path d="M722 372 Q790 352 838 362 Q852 400 840 470 Q832 540 775 580 L700 600 L690 420 Z" fill="#121215" filter="url(#b3)"/>
<!-- sofa left -->
<path d="M70 618 L305 616 L345 700 L270 770 L120 810 Z" fill="#38383d" filter="url(#b3)"/>
<circle cx="260" cy="716" r="6" fill="#222"/><circle cx="150" cy="722" r="6" fill="#222"/>
<!-- sweater -->
<path d="M120 800 Q240 740 330 690 L470 900 L700 1040 L690 760 Q700 660 740 640 L830 720 Q960 740 1030 800 V1080 H200 Z" fill="url(#sw)" filter="url(#b3)"/>
<path d="M130 800 Q240 745 325 700 L450 930 L380 1000 L200 900 Z" fill="#1c1d16" filter="url(#b6)"/>
<path d="M700 665 Q760 650 826 716 Q790 760 735 838 Q700 920 668 1008 L620 1040 L600 820 Z" fill="#15160f" filter="url(#b3)"/>
<path d="M826 722 Q780 780 738 842 Q705 920 672 1010" stroke="#6b6d55" stroke-width="5" fill="none" opacity=".8"/>
<g stroke="#23251c" stroke-width="5" opacity=".85" fill="none"><path d="M800 830 Q900 790 1000 850 M790 870 Q900 830 1010 900 M775 910 Q890 870 1000 950 M760 950 Q870 915 970 990 M745 990 Q840 960 920 1020 M820 790 Q910 760 1010 810"/></g>
<g stroke="#50543f" stroke-width="3" opacity=".5" fill="none"><path d="M805 850 Q900 810 1005 875 M782 890 Q895 850 1005 925 M768 930 Q880 892 985 970 M752 970 Q855 938 945 1005"/></g>
<path d="M620 900 L730 700 L770 1040 L620 1040 Z" fill="#1a1b14"/>
<!-- neck / hand -->
<path d="M480 900 L660 790 L700 670 L715 760 L690 900 L650 1010 L440 1000 Z" fill="#b07c64" filter="url(#b3)"/>
<path d="M442 955 Q520 930 600 960 Q640 985 640 1030 L440 1040 Z" fill="#e2b49c" filter="url(#b3)"/>
<path d="M450 952 Q540 935 600 962" stroke="#8a5c48" stroke-width="6" fill="none" filter="url(#b3)"/>
<!-- ear -->
<ellipse cx="722" cy="590" rx="28" ry="66" fill="#dba088" filter="url(#b3)"/>
<ellipse cx="720" cy="585" rx="12" ry="40" fill="#b97860" filter="url(#b3)"/>
<!-- face -->
<path d="M318 406 Q303 500 300 600 Q302 660 311 694 Q325 760 344 802 Q360 860 386 904 Q420 945 470 955 Q520 955 560 920 Q620 860 653 802 Q685 740 699 661 Q712 600 706 536 Q700 450 669 397 Q600 330 485 341 Q380 350 318 406 Z" fill="url(#skin)" filter="url(#b3)"/>
<!-- left shadow side of face -->
<path d="M318 406 Q300 500 300 600 Q302 660 311 694 Q325 760 344 802 Q350 720 352 640 Q340 520 360 420 Z" fill="#7c5644" opacity=".55" filter="url(#b6)"/>
<!-- cheek/nose -->
<ellipse cx="430" cy="715" rx="42" ry="36" fill="#d3a088" opacity=".8" filter="url(#b6)"/>
<path d="M455 650 Q480 720 450 752 Q430 760 410 750" stroke="#8e5f4c" stroke-width="10" fill="none" opacity=".6" filter="url(#b3)"/>
<ellipse cx="585" cy="735" rx="60" ry="45" fill="#cf9880" opacity=".6" filter="url(#b6)"/>
<!-- beard -->
<path d="M350 790 Q420 760 500 775 Q600 770 670 740 Q655 810 620 860 Q560 935 470 955 Q420 945 386 904 Q362 860 350 790 Z" fill="#a18a7a" opacity=".8" filter="url(#b6)"/>
<path d="M372 770 Q440 750 520 770" stroke="#8a6e5e" stroke-width="16" fill="none" opacity=".7" filter="url(#b3)"/>
<!-- mouth -->
<ellipse cx="446" cy="838" rx="58" ry="24" fill="#d7928e" filter="url(#b3)"/>
<path d="M395 815 Q450 800 500 818 Q450 832 395 815 Z" fill="#4a2624" filter="url(#b3)"/>
<!-- eyebrows -->
<path d="M290 585 Q350 560 415 580 M450 578 Q520 560 600 585" stroke="#5a4034" stroke-width="12" fill="none" opacity=".7" filter="url(#b3)"/>
<!-- hair -->
<g filter="url(#hairf)">
<path d="M286 400 Q282 340 320 290 Q380 225 503 210 Q610 205 680 255 Q725 300 735 380 Q735 470 712 545 L690 480 Q685 420 660 392 Q600 340 485 338 Q390 345 330 395 Q310 420 302 470 Z" fill="#3a3129"/>
</g>
<g stroke="#5d5348" stroke-width="7" fill="none" opacity=".7" filter="url(#b3)"><path d="M340 300 q30 -30 60 -10 M430 250 q40 -30 70 0 M540 240 q40 -20 60 15 M620 290 q40 0 50 40 M380 330 q40 -25 80 -5 M500 300 q45 -15 85 15 M660 350 q30 25 30 70"/></g>
<!-- glasses -->
<path d="M262 612 L400 606 L392 668 Q330 684 288 662 Z" fill="#9aa0b4" opacity=".38"/>
<path d="M456 612 L590 610 L580 668 Q520 684 474 666 Z" fill="#a8aec4" opacity=".34"/>
<ellipse cx="351" cy="606" rx="20" ry="10" fill="#2c2422"/><ellipse cx="512" cy="604" rx="20" ry="10" fill="#2c2422"/>
<g fill="none" stroke="#151517" stroke-width="19" stroke-linejoin="round">
<path d="M240 597 L418 594 L410 672 Q400 684 340 688 Q290 684 276 664 Z"/>
<path d="M440 597 L596 597 L588 676 Q575 688 520 688 Q470 684 458 668 Z"/>
</g>
<path d="M418 600 L440 600" stroke="#151517" stroke-width="22"/>
<path d="M600 602 L690 538" stroke="#6e6e70" stroke-width="17"/>
<path d="M232 598 L300 566" stroke="#151517" stroke-width="13"/>
</g></g>
</svg></div></body></html>
